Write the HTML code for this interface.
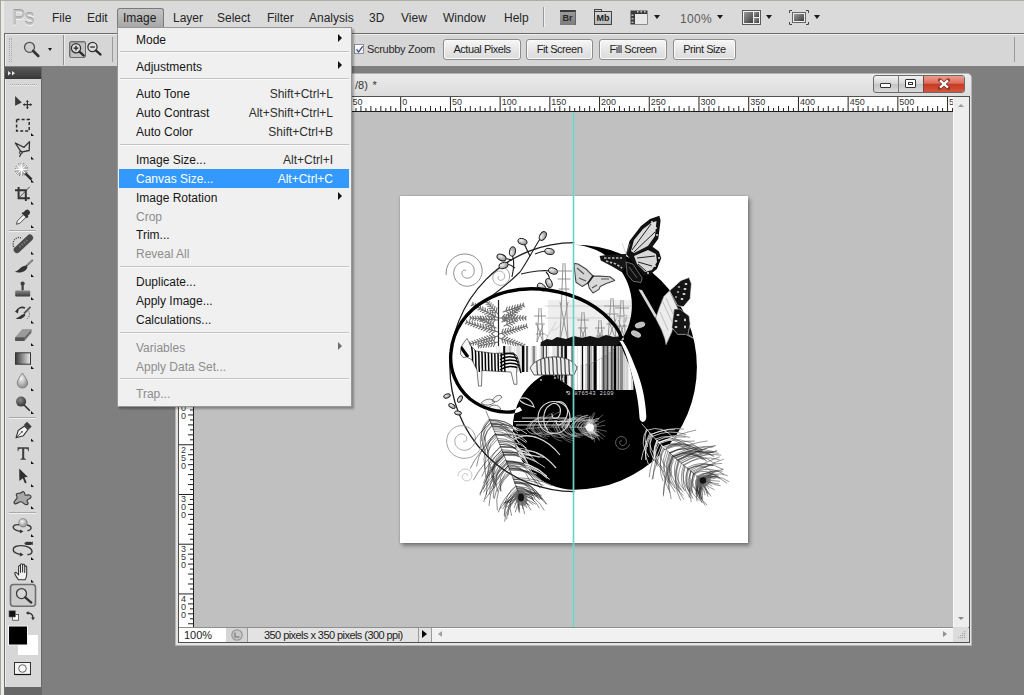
<!DOCTYPE html>
<html><head><meta charset="utf-8">
<style>
*{margin:0;padding:0;box-sizing:border-box}
html,body{width:1024px;height:695px;overflow:hidden;background:#7f7f7f;font-family:"Liberation Sans",sans-serif;position:relative}
.a{position:absolute}
svg{overflow:visible}
.mb{position:absolute;font-size:12px;color:#262626;top:11px;line-height:14px;white-space:nowrap}
.btn{position:absolute;top:39px;height:21px;border:1px solid #8c8c8c;border-radius:3px;background:linear-gradient(#f7f7f7,#e4e4e4 60%,#dcdcdc);font-size:11px;color:#1e1e1e;text-align:center;line-height:19px;white-space:nowrap;letter-spacing:-0.45px;box-shadow:inset 0 0 0 1px #fbfbfb}
.mi{position:absolute;left:136px;font-size:12px;line-height:14px;color:#161616;white-space:nowrap}
.mi.d{color:#8d8d8d}
.sc{position:absolute;font-size:12px;line-height:14px;color:#2e2e2e;white-space:nowrap}
.sep{position:absolute;left:120px;width:229px;height:1px;background:#c2c2c2;border-bottom:1px solid #fafafa;box-sizing:content-box}
.arr{position:absolute;left:338px;width:0;height:0;border-top:4px solid transparent;border-bottom:4px solid transparent;border-left:4px solid #111}
.dd{position:absolute;width:0;height:0;border-left:3.5px solid transparent;border-right:3.5px solid transparent;border-top:4.5px solid #1a1a1a}
.tri{position:absolute;width:0;height:0;border-left:3px solid transparent;border-bottom:3px solid #111}
</style></head><body>

<!-- app frame + menu bar -->
<div class="a" style="left:0;top:0;width:1024px;height:33px;background:#dadada;border-top:1px solid #a9ada3"></div>
<div class="a" style="left:0;top:0;width:1px;height:695px;background:#a3a3a3"></div>
<div class="a" style="left:1px;top:1px;width:3px;height:694px;background:#ebebe5"></div>
<div class="a" style="left:4px;top:33px;width:1px;height:662px;background:#6e6e6e"></div>
<div class="a" style="left:12px;top:6px;font-size:22px;line-height:24px;color:#c4c4c4;letter-spacing:-1px;transform:scaleX(0.92);transform-origin:0 0;text-shadow:0 -1px 0 #9c9c9c,0 1px 0 #f4f4f4">Ps</div>
<div class="mb" style="left:52px">File</div>
<div class="mb" style="left:87px">Edit</div>
<div class="a" style="left:117px;top:8px;width:47px;height:20px;border:1px solid #7a7a7a;border-bottom:none;border-radius:3px 3px 0 0;background:linear-gradient(#c4c4c4,#a6a6a6)"></div>
<div class="mb" style="left:123px;color:#1c1c1c">Image</div>
<div class="mb" style="left:173px">Layer</div>
<div class="mb" style="left:217px">Select</div>
<div class="mb" style="left:267px">Filter</div>
<div class="mb" style="left:309px">Analysis</div>
<div class="mb" style="left:369px">3D</div>
<div class="mb" style="left:401px">View</div>
<div class="mb" style="left:443px">Window</div>
<div class="mb" style="left:504px">Help</div>
<div class="a" style="left:543px;top:7px;width:1px;height:20px;background:#9a9a9a"></div>
<div class="a" style="left:544px;top:7px;width:1px;height:20px;background:#f0f0f0"></div>
<!-- Br -->
<div class="a" style="left:560px;top:10px;width:16px;height:15px;background:linear-gradient(#9a9a9a,#7c7c7c);border-top:2px solid #3a3a3a;border-right:1px solid #666;font-size:9px;font-weight:bold;color:#2a2a2a;line-height:12px;text-align:center">Br</div>
<!-- Mb -->
<div class="a" style="left:594px;top:9px;width:8px;height:3px;border:1px solid #444;border-bottom:none;background:#cfcfcf"></div>
<div class="a" style="left:594px;top:11px;width:18px;height:14px;background:linear-gradient(#d6d6d6,#b9b9b9);border:1px solid #444;font-size:9px;font-weight:bold;color:#222;line-height:12px;text-align:center">Mb</div>
<!-- film -->
<svg class="a" style="left:630px;top:10px" width="18" height="15">
<rect x="0.5" y="0.5" width="17" height="14" fill="#3c3c3c"/>
<rect x="5" y="4" width="12" height="10" fill="#e8e8e8"/>
<rect x="1.5" y="4.5" width="2" height="1.5" fill="#bbb"/><rect x="1.5" y="8" width="2" height="1.5" fill="#bbb"/><rect x="1.5" y="11.5" width="2" height="1.5" fill="#bbb"/>
<rect x="7" y="1" width="1.5" height="1.5" fill="#ccc"/><rect x="10.5" y="1" width="1.5" height="1.5" fill="#ccc"/><rect x="14" y="1" width="1.5" height="1.5" fill="#ccc"/>
</svg>
<div class="dd" style="left:654px;top:15px"></div>
<div class="mb" style="left:680px;top:12px;color:#5a5a5a;letter-spacing:0.3px">100%</div>
<div class="dd" style="left:717px;top:15px"></div>
<!-- layout icon -->
<svg class="a" style="left:742px;top:10px" width="19" height="15">
<rect x="0.5" y="0.5" width="18" height="14" fill="#f2f2f2" stroke="#5a5a5a"/>
<defs><linearGradient id="lg1" x1="0" y1="0" x2="1" y2="1"><stop offset="0" stop-color="#9a9a9a"/><stop offset="1" stop-color="#3e3e3e"/></linearGradient></defs>
<rect x="2" y="2" width="9" height="11" fill="url(#lg1)"/>
<rect x="12" y="2" width="5" height="5" fill="url(#lg1)"/>
<rect x="12" y="8" width="5" height="5" fill="url(#lg1)"/>
</svg>
<div class="dd" style="left:766px;top:15px"></div>
<!-- screen mode -->
<svg class="a" style="left:789px;top:10px" width="20" height="15">
<path d="M0.5 3V0.5H3M17 0.5H19.5V3M19.5 12V14.5H17M3 14.5H0.5V12" fill="none" stroke="#444"/>
<rect x="3.5" y="2.5" width="13" height="10" fill="#eee" stroke="#666"/>
<rect x="5" y="4" width="10" height="7" fill="url(#lg1)"/>
</svg>
<div class="dd" style="left:814px;top:15px"></div>

<!-- options bar -->
<div class="a" style="left:4px;top:33px;width:1020px;height:33px;background:#d6d6d6;border-top:1px solid #6b6b6b;border-left:1px solid #6b6b6b"></div>
<div class="a" style="left:5px;top:34px;width:1019px;height:1px;background:#eeeeee"></div>
<div class="a" style="left:5px;top:34px;width:1px;height:32px;background:#eeeeee"></div>
<div class="a" style="left:9px;top:38px;width:1px;height:24px;border-left:1px dotted #acacac"></div>
<div class="a" style="left:11px;top:38px;width:1px;height:24px;border-left:1px dotted #acacac"></div>
<svg class="a" style="left:22px;top:40px" width="20" height="20">
<circle cx="7.5" cy="7.3" r="5" fill="#cfcfcf" stroke="#505050" stroke-width="1.3"/>
<line x1="11.2" y1="11" x2="16.3" y2="16" stroke="#333" stroke-width="2.6" stroke-linecap="round"/>
</svg>
<div class="dd" style="left:48px;top:48px;border-left-width:2.5px;border-right-width:2.5px;border-top-width:3.5px"></div>
<div class="a" style="left:63px;top:35px;width:1px;height:30px;background:#8f8f8f"></div>
<div class="a" style="left:64px;top:35px;width:1px;height:30px;background:#ececec"></div>
<div class="a" style="left:69px;top:41px;width:17px;height:17px;border:1px solid #6c6c6c;border-radius:2px;background:#c3c3c3;box-shadow:inset 1px 1px 1px #9a9a9a"></div>
<svg class="a" style="left:69px;top:41px" width="20" height="20">
<circle cx="7" cy="7.2" r="4.6" fill="#ddd" stroke="#333" stroke-width="1.3"/>
<path d="M4.6 7.2H9.4M7 4.8V9.6" stroke="#222" stroke-width="1.3"/>
<line x1="10.4" y1="10.6" x2="14.8" y2="14.6" stroke="#2a2a2a" stroke-width="2.2" stroke-linecap="round"/>
</svg>
<svg class="a" style="left:86px;top:40px" width="20" height="20">
<circle cx="6.5" cy="7" r="4.6" fill="#ddd" stroke="#333" stroke-width="1.3"/>
<path d="M4.2 7H8.8" stroke="#222" stroke-width="1.3"/>
<line x1="9.8" y1="10.4" x2="14.6" y2="14.6" stroke="#2a2a2a" stroke-width="2.2" stroke-linecap="round"/>
</svg>
<div class="a" style="left:112px;top:37px;width:1px;height:25px;background:#9a9a9a"></div>
<div class="a" style="left:354px;top:44px;width:10px;height:10px;border:1px solid #8e8f9f;background:linear-gradient(#fff,#eaeaea)"></div>
<svg class="a" style="left:355px;top:45px" width="9" height="9"><path d="M1.6 4.3L3.6 7L7.6 1.3" fill="none" stroke="#36427a" stroke-width="1.2"/></svg>
<div class="a" style="left:367px;top:43px;font-size:11px;line-height:12px;color:#2a2a2a;letter-spacing:-0.3px;white-space:nowrap">Scrubby Zoom</div>
<div class="btn" style="left:443px;width:78px">Actual Pixels</div>
<div class="btn" style="left:526px;width:67px">Fit Screen</div>
<div class="btn" style="left:599px;width:68px">Fill Screen</div>
<div class="btn" style="left:673px;width:63px">Print Size</div>
<div class="a" style="left:1014px;top:37px;width:1px;height:25px;background:#9a9a9a"></div>

<!-- toolbox -->
<div class="a" style="left:5px;top:67px;width:37px;height:620px;background:#d7d7d7;border-right:1px solid #666"></div>
<div class="a" style="left:5px;top:67px;width:36px;height:12px;background:linear-gradient(#595959,#383838)"></div>
<div class="a" style="left:5px;top:687px;width:37px;height:8px;background:#676767"></div>
<div class="a" style="left:5px;top:79px;width:1px;height:608px;background:#eeeeee"></div>
<svg class="a" style="left:0;top:0" width="45" height="695">
<defs>
<linearGradient id="tg1" x1="0" y1="0" x2="0" y2="1"><stop offset="0" stop-color="#8a8a8a"/><stop offset="1" stop-color="#3a3a3a"/></linearGradient>
<linearGradient id="tg2" x1="0" y1="0" x2="1" y2="0"><stop offset="0" stop-color="#3a3a3a"/><stop offset="1" stop-color="#ececec"/></linearGradient>
<radialGradient id="tg3" cx="0.4" cy="0.35" r="0.7"><stop offset="0" stop-color="#f4f4f4"/><stop offset="1" stop-color="#8a8a8a"/></radialGradient>
<radialGradient id="tg4" cx="0.4" cy="0.35" r="0.7"><stop offset="0" stop-color="#8a8a8a"/><stop offset="1" stop-color="#2e2e2e"/></radialGradient>
</defs>
<!-- header arrows -->
<path d="M8 71L11 73.3L8 75.6Z M12 71L15 73.3L12 75.6Z" fill="#e8e8e8"/>
<!-- grip -->
<line x1="10" y1="84.5" x2="37" y2="84.5" stroke="#a8a8a8" stroke-dasharray="1 1"/>
<line x1="10" y1="85.5" x2="37" y2="85.5" stroke="#f4f4f4" stroke-dasharray="1 1"/>
<!-- move -->
<path d="M15.1 96L21.8 102.6L15.1 105.8Z" fill="#3a3a3a"/>
<path d="M27.4 100.5V108.8M23.2 104.6H31.8" stroke="#333" stroke-width="1.2"/>
<path d="M25.8 102L27.4 100.3L29 102Z M25.8 107.2L27.4 108.9L29 107.2Z M24.8 103L23.1 104.6L24.8 106.2Z M30 103L31.7 104.6L30 106.2Z" fill="#333"/>
<!-- marquee -->
<rect x="16.6" y="119.6" width="12.6" height="11.4" fill="none" stroke="#2a2a2a" stroke-width="1.5" stroke-dasharray="3 2"/>
<!-- lasso -->
<path d="M15.3 143L24 147.3L29.5 141.6L29.2 150.5L21.2 152.2Z" fill="none" stroke="#333" stroke-width="1.3" stroke-linejoin="round"/>
<circle cx="20.9" cy="152.6" r="1.5" fill="none" stroke="#333" stroke-width="1"/>
<path d="M20.6 154L19.6 157" stroke="#333" stroke-width="1.2"/>
<!-- quick select -->
<circle cx="21.5" cy="169.5" r="5.5" fill="url(#tg3)" opacity="0.9"/>
<path d="M21.5 162.5V176.5M14.5 169.5H28.5M16.5 164.5L26.5 174.5M26.5 164.5L16.5 174.5" stroke="#fff" stroke-width="1" opacity="0.9"/>
<circle cx="21.5" cy="169.5" r="6.3" fill="none" stroke="#555" stroke-width="0.9" stroke-dasharray="1 1.8"/>
<path d="M25.4 173.4L31.5 179.5" stroke="#2e2e2e" stroke-width="2.6"/>
<!-- crop -->
<path d="M18.6 187V198.3H29.8 M15 190.3H25.8V201" fill="none" stroke="#333" stroke-width="2"/>
<path d="M19.3 197.5L29.7 186.8" stroke="#444" stroke-width="0.9"/>
<!-- eyedropper -->
<path d="M16.4 224.3L17.5 220.8L24 214.2L26.5 216.7L20 223.2Z" fill="#f2f2f2" stroke="#444" stroke-width="0.9"/>
<path d="M23.3 212.5L25.8 210L27.8 209.5L29.6 211L30.2 212.5L29.2 214.5L27.8 215.6L28.4 217L26.8 218.2L21.6 213.2L23 212Z" fill="#333"/>
<!-- sep -->
<line x1="9" y1="230.5" x2="36" y2="230.5" stroke="#a9a9a9"/>
<line x1="9" y1="231.5" x2="36" y2="231.5" stroke="#f1f1f1"/>
<!-- healing -->
<path d="M14.8 248.5A6 6.5 0 0 1 21 237.8" fill="none" stroke="#333" stroke-width="1.3" stroke-dasharray="1 1.2"/>
<path d="M17 249.8L29.8 237.8" stroke="#4a4a4a" stroke-width="6.5" stroke-linecap="round"/>
<path d="M19.5 247L27.5 239.8" stroke="#7a7a7a" stroke-width="2" stroke-dasharray="1.5 1.5"/>
<!-- brush -->
<path d="M26.3 266L32.7 259.8" stroke="#555" stroke-width="1.8"/>
<path d="M27 265.2L32.2 260.3" stroke="#e8e8e8" stroke-width="0.6"/>
<path d="M15 271.5C17.5 271.5 19 268.8 21 267.5C23 266 25 265.5 26.8 265.8L27.4 267.2C26.6 269.5 24.5 271.6 21.5 272.3C19 272.8 16.5 272.4 15 271.5Z" fill="#333"/>
<!-- stamp -->
<circle cx="22.6" cy="283.6" r="2.1" fill="#3e3e3e"/>
<rect x="21.5" y="284.5" width="2.2" height="6" fill="#3e3e3e"/>
<rect x="15.2" y="290.4" width="15" height="6" rx="1" fill="url(#tg1)"/>
<!-- history brush -->
<path d="M16.5 311.5C17.5 308 21.5 306.5 25 308" fill="none" stroke="#333" stroke-width="1.6"/>
<path d="M14.8 311.5L18 313.6L18.6 309.6Z" fill="#333"/>
<path d="M24 313.5L30.5 306.8" stroke="#555" stroke-width="1.8"/>
<path d="M15.5 318.2C18 318 19.6 316.2 21.6 315C23.2 314 24.5 313.8 25 314.2L25.2 315.4C24 317.2 22 318.7 19.5 319C17.8 319.2 16.3 318.8 15.5 318.2Z" fill="#333"/>
<path d="M28.8 311.5A4 5 0 0 1 26.5 319" fill="none" stroke="#444" stroke-dasharray="1 1.2"/>
<!-- eraser -->
<path d="M15.2 337.5L22.4 329.5H31.6L31.4 332.8L24.5 340.8H15.3Z" fill="#6a6a6a"/>
<path d="M15.2 337.5L22.4 329.5H31.6L24.4 337.5Z" fill="#9a9a9a"/>
<path d="M15.2 337.5H24.4V341H15.2Z" fill="#555"/>
<!-- gradient -->
<rect x="15.5" y="352.8" width="15" height="11.4" fill="url(#tg2)" stroke="#333" stroke-width="1"/>
<!-- blur -->
<path d="M22.4 373C20 376.5 17.2 380 17.2 383C17.2 386 19.6 388 22.4 388C25.2 388 27.6 386 27.6 383C27.6 380 24.8 376.5 22.4 373Z" fill="url(#tg3)" stroke="#777" stroke-width="0.8"/>
<!-- dodge -->
<circle cx="21.1" cy="401.6" r="5" fill="url(#tg4)"/>
<path d="M24.3 405.2L29.8 410.8" stroke="#2e2e2e" stroke-width="1.6"/>
<!-- sep -->
<line x1="9" y1="417.5" x2="36" y2="417.5" stroke="#a9a9a9"/>
<line x1="9" y1="418.5" x2="36" y2="418.5" stroke="#f1f1f1"/>
<!-- pen -->
<path d="M16 437.8L18.2 430.5L24.5 426L28 429.5L23.4 435.7Z" fill="#f4f4f4" stroke="#333" stroke-width="1.1" stroke-linejoin="round"/>
<path d="M16.2 437.6L21.5 432.3" stroke="#333" stroke-width="0.9"/>
<circle cx="22" cy="431.8" r="0.9" fill="#333"/>
<path d="M24 424.8L27 421.8L31.7 426.5L28.7 429.5Z" fill="#3e3e3e"/>
<!-- type -->
<path d="M17.6 447.3H28.8V451.3H28.1C28 449.6 27.4 448.8 26.2 448.8H24.2V457.6C24.2 458.5 24.8 458.8 26 458.9V459.7H20.4V458.9C21.6 458.8 22.2 458.5 22.2 457.6V448.8H20.2C19 448.8 18.4 449.6 18.3 451.3H17.6Z" fill="#3e3e3e"/>
<!-- path select -->
<path d="M19.2 468.6L27.8 477L24.4 477.3L26.6 482.6L25 483.4L22.8 478.3L19.4 481Z" fill="#2e2e2e"/>
<!-- shape -->
<path d="M21.5 492.5C23 491 24.5 491.5 24.8 494C25.2 496.5 27 494.5 29.5 495C31.8 495.5 31.5 498.3 29 499C26.8 499.7 26.5 501 27.8 502.5C29 504 26.5 505.5 24.5 504C22.6 502.6 21.6 501 19.6 502C17.5 503 14.8 505 14.2 503C13.6 501.2 16.2 499.8 17 498C17.8 496.3 15.5 495.5 16.5 494C17.5 492.5 20 494 21.5 492.5Z" fill="#a8a8a8" stroke="#3e3e3e" stroke-width="1.2"/>
<!-- sep -->
<line x1="9" y1="512.5" x2="36" y2="512.5" stroke="#a9a9a9"/>
<line x1="9" y1="513.5" x2="36" y2="513.5" stroke="#f1f1f1"/>
<!-- 3d rotate -->
<path d="M19.5 524.8C15.5 524.2 13 525.6 13.2 527.3C13.4 529.2 17.5 531.5 22 531.5M27.5 530.8C30 530.2 31.5 529 31 527.4C30.6 526.2 29 525.3 27 525" fill="none" stroke="#3a3a3a" stroke-width="1.4"/>
<path d="M20 529.4L23.5 531.6L19.8 533.2Z" fill="#333"/>
<circle cx="23" cy="522.8" r="4.2" fill="url(#tg3)" stroke="#666" stroke-width="0.6"/>
<!-- 3d orbit -->
<rect x="25.5" y="541.8" width="5.5" height="3.2" fill="#333"/><path d="M31 542.2L32.8 541.5V545L31 544.4Z" fill="#333"/><rect x="24.5" y="542.6" width="1.2" height="1.6" fill="#333"/>
<path d="M22 554.6C17.5 554.2 13.2 552.4 13.2 549.6C13.2 546.8 17 545.5 21.5 545.6C27 545.8 32 548.2 32 551.5C32 553.3 30.2 554.6 27.5 554.8" fill="none" stroke="#3a3a3a" stroke-width="1.4"/>
<path d="M20 552.5L23.6 554.8L19.8 556.4Z" fill="#333"/>
<!-- hand -->
<path d="M18.5 579.8C17 578 15.5 575.6 14.8 573.8C14.3 572.5 15.8 571.8 16.8 573L18.6 575V566.5C18.6 565.2 20.4 565.2 20.5 566.5V572.2V564.8C20.5 563.4 22.5 563.4 22.6 564.8V572V565.2C22.6 564 24.6 564 24.7 565.2V572.4V567C24.7 565.8 26.6 565.8 26.7 567V574C26.7 576.5 26.2 578.3 25.2 579.8Z" fill="#f0f0f0" stroke="#333" stroke-width="1.05" stroke-linejoin="round"/>
<!-- zoom selected -->
<rect x="10.5" y="584.5" width="25" height="21.8" rx="3" fill="#cdcdcd" stroke="#6e6e6e" stroke-width="1.6"/>
<circle cx="21.5" cy="593.6" r="5" fill="#d6d6d6" stroke="#3a3a3a" stroke-width="1.3"/>
<path d="M25.2 597.3L31.3 602.6" stroke="#2e2e2e" stroke-width="2.2" stroke-linecap="round"/>
<!-- default colors -->
<rect x="12.6" y="614.6" width="6" height="5.6" fill="#fff" stroke="#444" stroke-width="0.8"/>
<rect x="9" y="610.8" width="6.4" height="6.2" fill="#111" stroke="#666" stroke-width="0.6"/>
<!-- swap -->
<path d="M27.2 613C30.5 612.8 33 614.5 33 618" fill="none" stroke="#333" stroke-width="1.3"/>
<path d="M26 613L28.4 611V615Z M33 620.2L31 617.6H35Z" fill="#333"/>
<!-- fg/bg -->
<rect x="18" y="635" width="20" height="20" fill="#fff"/>
<rect x="8.5" y="626" width="19" height="19" fill="#000" stroke="#f4f4f4" stroke-width="1"/>
<!-- quick mask -->
<rect x="14.5" y="662.5" width="16" height="12" fill="#f4f4f4" stroke="#333" stroke-width="1"/>
<line x1="15" y1="674.5" x2="31" y2="674.5" stroke="#111" stroke-width="1.2"/>
<circle cx="22.5" cy="668.5" r="3.8" fill="#fafafa" stroke="#555" stroke-width="0.9"/>
<!-- corner triangles -->
<g fill="#111">
<path d="M31 136V133L34 136Z"/><path d="M31 159.5V156.5L34 159.5Z"/><path d="M31 182.5V179.5L34 182.5Z"/><path d="M31 204.5V201.5L34 204.5Z"/><path d="M31 228V225L34 228Z"/>
<path d="M31 254.5V251.5L34 254.5Z"/><path d="M31 277V274L34 277Z"/><path d="M31 300V297L34 300Z"/><path d="M31 323.5V320.5L34 323.5Z"/><path d="M31 346V343L34 346Z"/><path d="M31 369V366L34 369Z"/><path d="M31 391V388L34 391Z"/><path d="M31 414V411L34 414Z"/>
<path d="M31 441.5V438.5L34 441.5Z"/><path d="M31 464V461L34 464Z"/><path d="M31 487V484L34 487Z"/><path d="M31 509V506L34 509Z"/>
<path d="M31 537V534L34 537Z"/><path d="M31 560V557L34 560Z"/><path d="M31 582.5V579.5L34 582.5Z"/>
</g>
</svg>

<!-- document window -->
<div class="a" style="left:175px;top:73px;width:797px;height:573px;background:#e4e4e4;border:1px solid #b4b4b4;border-radius:5px 5px 0 0"></div>
<div class="a" style="left:176px;top:74px;width:795px;height:22px;background:linear-gradient(#ececec,#dcdcdc);border-radius:4px 4px 0 0"></div>
<div class="a" style="left:355px;top:79px;font-size:11px;line-height:13px;color:#333;white-space:nowrap">/8)<span style="margin-left:1.5px"> *</span></div>
<!-- window buttons -->
<div class="a" style="left:873px;top:75px;width:92px;height:18px;border:1px solid #6a6a6a;border-radius:3px;overflow:hidden;background:linear-gradient(#f2f2f2,#d4d4d4 50%,#c4c4c4 51%,#dadada)"></div>
<div class="a" style="left:898px;top:76px;width:1px;height:16px;background:#7a7a7a"></div>
<div class="a" style="left:923px;top:76px;width:1px;height:16px;background:#6a4a40"></div>
<div class="a" style="left:924px;top:76px;width:40px;height:16px;border-radius:0 2px 2px 0;background:linear-gradient(#eb9c8c,#dc6e5c 45%,#c93a22 52%,#d4553e)"></div>
<div class="a" style="left:880px;top:83px;width:11px;height:5px;border:1px solid #333;border-radius:1px;background:#fff"></div>
<div class="a" style="left:905px;top:79px;width:11px;height:9px;border:1px solid #333;border-radius:1px;background:#fff"></div>
<div class="a" style="left:908px;top:82px;width:5px;height:3px;border:1px solid #333"></div>
<svg class="a" style="left:936px;top:77px" width="16" height="14"><path d="M3.8 3.2L12.2 10.8M12.2 3.2L3.8 10.8" stroke="#7a3024" stroke-width="3.6" stroke-linecap="round"/><path d="M4 3.4L12 10.6M12 3.4L4 10.6" stroke="#fff" stroke-width="2.2"/></svg>
<!-- content border -->
<div class="a" style="left:178px;top:96px;width:792px;height:547px;background:#c0c0c0;border:1px solid #505050"></div>
<div class="a" style="left:179px;top:97px;width:774px;height:15px;background:#fff;border-bottom:1px solid #1e1e1e"></div>
<div class="a" style="left:179px;top:112px;width:15px;height:515px;background:#fff;border-right:1px solid #1e1e1e"></div>
<div class="a" style="left:953px;top:97px;width:16px;height:530px;background:#ededed;border-left:1px solid #f8f8f8"></div>
<div class="a" style="left:958px;top:104px;width:0;height:0;border-left:3.5px solid transparent;border-right:3.5px solid transparent;border-bottom:3px solid #9a9a9a"></div>
<div class="a" style="left:958px;top:617px;width:0;height:0;border-left:3.5px solid transparent;border-right:3.5px solid transparent;border-top:3px solid #8a8a8a"></div>
<!-- status bar -->
<div class="a" style="left:179px;top:627px;width:790px;height:15px;background:#e3e3e3;border-top:1px solid #8e8e8e"></div>
<div class="a" style="left:179px;top:628px;width:47px;height:14px;background:#fff"></div>
<div class="a" style="left:184px;top:629px;font-size:11px;line-height:13px;color:#222">100%</div>
<div class="a" style="left:226px;top:628px;width:21px;height:14px;background:#d5d5d5"></div>
<svg class="a" style="left:229px;top:628px" width="16" height="14"><circle cx="8" cy="7" r="5.2" fill="#c9c9c9" stroke="#9a9a9a" stroke-width="1.3"/><path d="M6 4.5V9H10.5" fill="none" stroke="#8a8a8a" stroke-width="1.6"/></svg>
<div class="a" style="left:247px;top:628px;width:1px;height:14px;background:#9a9a9a"></div>
<div class="a" style="left:264px;top:629px;font-size:11px;line-height:13px;color:#222;white-space:nowrap;letter-spacing:-0.56px">350 pixels x 350 pixels (300 ppi)</div>
<div class="a" style="left:418px;top:628px;width:1px;height:14px;background:#9a9a9a"></div>
<div class="a" style="left:422px;top:630px;width:0;height:0;border-top:4.5px solid transparent;border-bottom:4.5px solid transparent;border-left:5.5px solid #000"></div>
<div class="a" style="left:431px;top:628px;width:1px;height:14px;background:#9a9a9a"></div>
<div class="a" style="left:432px;top:628px;width:521px;height:14px;background:#f1f1f1;border-top:1px solid #fafafa"></div>
<div class="a" style="left:438px;top:631px;width:0;height:0;border-top:3.5px solid transparent;border-bottom:3.5px solid transparent;border-right:4px solid #a0a0a0"></div>
<div class="a" style="left:943px;top:631px;width:0;height:0;border-top:3.5px solid transparent;border-bottom:3.5px solid transparent;border-left:4px solid #909090"></div>
<div class="a" style="left:953px;top:627px;width:15px;height:15px;background:#dcdcdc"></div>
<svg class="a" style="left:955px;top:629px" width="12" height="12" fill="#a8a8a8"><rect x="9" y="2" width="1.2" height="1.2"/><rect x="7" y="4" width="1.2" height="1.2"/><rect x="9" y="4" width="1.2" height="1.2"/><rect x="5" y="6" width="1.2" height="1.2"/><rect x="7" y="6" width="1.2" height="1.2"/><rect x="9" y="6" width="1.2" height="1.2"/><rect x="3" y="8" width="1.2" height="1.2"/><rect x="5" y="8" width="1.2" height="1.2"/><rect x="7" y="8" width="1.2" height="1.2"/><rect x="9" y="8" width="1.2" height="1.2"/></svg>
<!-- image + shadow -->
<div class="a" style="left:400px;top:196px;width:348px;height:347px;background:#fff;box-shadow:0 0 2px rgba(0,0,0,0.25),2px 3px 4px rgba(0,0,0,0.35)"></div>

<svg class="a" style="left:194px;top:97px;overflow:hidden" width="759" height="15" font-family="Liberation Sans" style="overflow:hidden"><rect x="7.34" y="0" width="1" height="15" fill="#222"/><text x="9.34" y="8" font-size="9" fill="#333">200</text><rect x="12.31" y="11" width="1" height="4" fill="#222"/><rect x="17.28" y="9" width="1" height="6" fill="#222"/><rect x="22.25" y="11" width="1" height="4" fill="#222"/><rect x="27.23" y="9" width="1" height="6" fill="#222"/><rect x="32.20" y="11" width="1" height="4" fill="#222"/><rect x="37.17" y="9" width="1" height="6" fill="#222"/><rect x="42.14" y="11" width="1" height="4" fill="#222"/><rect x="47.11" y="9" width="1" height="6" fill="#222"/><rect x="52.08" y="11" width="1" height="4" fill="#222"/><rect x="57.06" y="0" width="1" height="15" fill="#222"/><text x="59.06" y="8" font-size="9" fill="#333">150</text><rect x="62.03" y="11" width="1" height="4" fill="#222"/><rect x="67.00" y="9" width="1" height="6" fill="#222"/><rect x="71.97" y="11" width="1" height="4" fill="#222"/><rect x="76.94" y="9" width="1" height="6" fill="#222"/><rect x="81.91" y="11" width="1" height="4" fill="#222"/><rect x="86.88" y="9" width="1" height="6" fill="#222"/><rect x="91.86" y="11" width="1" height="4" fill="#222"/><rect x="96.83" y="9" width="1" height="6" fill="#222"/><rect x="101.80" y="11" width="1" height="4" fill="#222"/><rect x="106.77" y="0" width="1" height="15" fill="#222"/><text x="108.77" y="8" font-size="9" fill="#333">100</text><rect x="111.74" y="11" width="1" height="4" fill="#222"/><rect x="116.71" y="9" width="1" height="6" fill="#222"/><rect x="121.68" y="11" width="1" height="4" fill="#222"/><rect x="126.66" y="9" width="1" height="6" fill="#222"/><rect x="131.63" y="11" width="1" height="4" fill="#222"/><rect x="136.60" y="9" width="1" height="6" fill="#222"/><rect x="141.57" y="11" width="1" height="4" fill="#222"/><rect x="146.54" y="9" width="1" height="6" fill="#222"/><rect x="151.51" y="11" width="1" height="4" fill="#222"/><rect x="156.49" y="0" width="1" height="15" fill="#222"/><text x="158.49" y="8" font-size="9" fill="#333">50</text><rect x="161.46" y="11" width="1" height="4" fill="#222"/><rect x="166.43" y="9" width="1" height="6" fill="#222"/><rect x="171.40" y="11" width="1" height="4" fill="#222"/><rect x="176.37" y="9" width="1" height="6" fill="#222"/><rect x="181.34" y="11" width="1" height="4" fill="#222"/><rect x="186.31" y="9" width="1" height="6" fill="#222"/><rect x="191.29" y="11" width="1" height="4" fill="#222"/><rect x="196.26" y="9" width="1" height="6" fill="#222"/><rect x="201.23" y="11" width="1" height="4" fill="#222"/><rect x="206.20" y="0" width="1" height="15" fill="#222"/><text x="208.20" y="8" font-size="9" fill="#333">0</text><rect x="211.17" y="11" width="1" height="4" fill="#222"/><rect x="216.14" y="9" width="1" height="6" fill="#222"/><rect x="221.11" y="11" width="1" height="4" fill="#222"/><rect x="226.09" y="9" width="1" height="6" fill="#222"/><rect x="231.06" y="11" width="1" height="4" fill="#222"/><rect x="236.03" y="9" width="1" height="6" fill="#222"/><rect x="241.00" y="11" width="1" height="4" fill="#222"/><rect x="245.97" y="9" width="1" height="6" fill="#222"/><rect x="250.94" y="11" width="1" height="4" fill="#222"/><rect x="255.91" y="0" width="1" height="15" fill="#222"/><text x="257.91" y="8" font-size="9" fill="#333">50</text><rect x="260.89" y="11" width="1" height="4" fill="#222"/><rect x="265.86" y="9" width="1" height="6" fill="#222"/><rect x="270.83" y="11" width="1" height="4" fill="#222"/><rect x="275.80" y="9" width="1" height="6" fill="#222"/><rect x="280.77" y="11" width="1" height="4" fill="#222"/><rect x="285.74" y="9" width="1" height="6" fill="#222"/><rect x="290.72" y="11" width="1" height="4" fill="#222"/><rect x="295.69" y="9" width="1" height="6" fill="#222"/><rect x="300.66" y="11" width="1" height="4" fill="#222"/><rect x="305.63" y="0" width="1" height="15" fill="#222"/><text x="307.63" y="8" font-size="9" fill="#333">100</text><rect x="310.60" y="11" width="1" height="4" fill="#222"/><rect x="315.57" y="9" width="1" height="6" fill="#222"/><rect x="320.54" y="11" width="1" height="4" fill="#222"/><rect x="325.52" y="9" width="1" height="6" fill="#222"/><rect x="330.49" y="11" width="1" height="4" fill="#222"/><rect x="335.46" y="9" width="1" height="6" fill="#222"/><rect x="340.43" y="11" width="1" height="4" fill="#222"/><rect x="345.40" y="9" width="1" height="6" fill="#222"/><rect x="350.37" y="11" width="1" height="4" fill="#222"/><rect x="355.35" y="0" width="1" height="15" fill="#222"/><text x="357.35" y="8" font-size="9" fill="#333">150</text><rect x="360.32" y="11" width="1" height="4" fill="#222"/><rect x="365.29" y="9" width="1" height="6" fill="#222"/><rect x="370.26" y="11" width="1" height="4" fill="#222"/><rect x="375.23" y="9" width="1" height="6" fill="#222"/><rect x="380.20" y="11" width="1" height="4" fill="#222"/><rect x="385.17" y="9" width="1" height="6" fill="#222"/><rect x="390.15" y="11" width="1" height="4" fill="#222"/><rect x="395.12" y="9" width="1" height="6" fill="#222"/><rect x="400.09" y="11" width="1" height="4" fill="#222"/><rect x="405.06" y="0" width="1" height="15" fill="#222"/><text x="407.06" y="8" font-size="9" fill="#333">200</text><rect x="410.03" y="11" width="1" height="4" fill="#222"/><rect x="415.00" y="9" width="1" height="6" fill="#222"/><rect x="419.97" y="11" width="1" height="4" fill="#222"/><rect x="424.95" y="9" width="1" height="6" fill="#222"/><rect x="429.92" y="11" width="1" height="4" fill="#222"/><rect x="434.89" y="9" width="1" height="6" fill="#222"/><rect x="439.86" y="11" width="1" height="4" fill="#222"/><rect x="444.83" y="9" width="1" height="6" fill="#222"/><rect x="449.80" y="11" width="1" height="4" fill="#222"/><rect x="454.77" y="0" width="1" height="15" fill="#222"/><text x="456.77" y="8" font-size="9" fill="#333">250</text><rect x="459.75" y="11" width="1" height="4" fill="#222"/><rect x="464.72" y="9" width="1" height="6" fill="#222"/><rect x="469.69" y="11" width="1" height="4" fill="#222"/><rect x="474.66" y="9" width="1" height="6" fill="#222"/><rect x="479.63" y="11" width="1" height="4" fill="#222"/><rect x="484.60" y="9" width="1" height="6" fill="#222"/><rect x="489.58" y="11" width="1" height="4" fill="#222"/><rect x="494.55" y="9" width="1" height="6" fill="#222"/><rect x="499.52" y="11" width="1" height="4" fill="#222"/><rect x="504.49" y="0" width="1" height="15" fill="#222"/><text x="506.49" y="8" font-size="9" fill="#333">300</text><rect x="509.46" y="11" width="1" height="4" fill="#222"/><rect x="514.43" y="9" width="1" height="6" fill="#222"/><rect x="519.40" y="11" width="1" height="4" fill="#222"/><rect x="524.38" y="9" width="1" height="6" fill="#222"/><rect x="529.35" y="11" width="1" height="4" fill="#222"/><rect x="534.32" y="9" width="1" height="6" fill="#222"/><rect x="539.29" y="11" width="1" height="4" fill="#222"/><rect x="544.26" y="9" width="1" height="6" fill="#222"/><rect x="549.23" y="11" width="1" height="4" fill="#222"/><rect x="554.20" y="0" width="1" height="15" fill="#222"/><text x="556.20" y="8" font-size="9" fill="#333">350</text><rect x="559.18" y="11" width="1" height="4" fill="#222"/><rect x="564.15" y="9" width="1" height="6" fill="#222"/><rect x="569.12" y="11" width="1" height="4" fill="#222"/><rect x="574.09" y="9" width="1" height="6" fill="#222"/><rect x="579.06" y="11" width="1" height="4" fill="#222"/><rect x="584.03" y="9" width="1" height="6" fill="#222"/><rect x="589.01" y="11" width="1" height="4" fill="#222"/><rect x="593.98" y="9" width="1" height="6" fill="#222"/><rect x="598.95" y="11" width="1" height="4" fill="#222"/><rect x="603.92" y="0" width="1" height="15" fill="#222"/><text x="605.92" y="8" font-size="9" fill="#333">400</text><rect x="608.89" y="11" width="1" height="4" fill="#222"/><rect x="613.86" y="9" width="1" height="6" fill="#222"/><rect x="618.83" y="11" width="1" height="4" fill="#222"/><rect x="623.81" y="9" width="1" height="6" fill="#222"/><rect x="628.78" y="11" width="1" height="4" fill="#222"/><rect x="633.75" y="9" width="1" height="6" fill="#222"/><rect x="638.72" y="11" width="1" height="4" fill="#222"/><rect x="643.69" y="9" width="1" height="6" fill="#222"/><rect x="648.66" y="11" width="1" height="4" fill="#222"/><rect x="653.63" y="0" width="1" height="15" fill="#222"/><text x="655.63" y="8" font-size="9" fill="#333">450</text><rect x="658.61" y="11" width="1" height="4" fill="#222"/><rect x="663.58" y="9" width="1" height="6" fill="#222"/><rect x="668.55" y="11" width="1" height="4" fill="#222"/><rect x="673.52" y="9" width="1" height="6" fill="#222"/><rect x="678.49" y="11" width="1" height="4" fill="#222"/><rect x="683.46" y="9" width="1" height="6" fill="#222"/><rect x="688.44" y="11" width="1" height="4" fill="#222"/><rect x="693.41" y="9" width="1" height="6" fill="#222"/><rect x="698.38" y="11" width="1" height="4" fill="#222"/><rect x="703.35" y="0" width="1" height="15" fill="#222"/><text x="705.35" y="8" font-size="9" fill="#333">500</text><rect x="708.32" y="11" width="1" height="4" fill="#222"/><rect x="713.29" y="9" width="1" height="6" fill="#222"/><rect x="718.26" y="11" width="1" height="4" fill="#222"/><rect x="723.24" y="9" width="1" height="6" fill="#222"/><rect x="728.21" y="11" width="1" height="4" fill="#222"/><rect x="733.18" y="9" width="1" height="6" fill="#222"/><rect x="738.15" y="11" width="1" height="4" fill="#222"/><rect x="743.12" y="9" width="1" height="6" fill="#222"/><rect x="748.09" y="11" width="1" height="4" fill="#222"/><rect x="753.07" y="0" width="1" height="15" fill="#222"/><text x="755.07" y="8" font-size="9" fill="#333">550</text><rect x="758.04" y="11" width="1" height="4" fill="#222"/></svg>
<svg class="a" style="left:179px;top:112px;overflow:hidden" width="15" height="515" font-family="Liberation Sans"><rect x="9" y="4.16" width="6" height="1" fill="#222"/><rect x="11" y="9.13" width="4" height="1" fill="#222"/><rect x="9" y="14.10" width="6" height="1" fill="#222"/><rect x="11" y="19.07" width="4" height="1" fill="#222"/><rect x="9" y="24.04" width="6" height="1" fill="#222"/><rect x="11" y="29.01" width="4" height="1" fill="#222"/><rect x="0" y="33.98" width="15" height="1" fill="#222"/><text x="2" y="42.48" font-size="9" fill="#333">5</text><text x="2" y="50.48" font-size="9" fill="#333">0</text><rect x="11" y="38.96" width="4" height="1" fill="#222"/><rect x="9" y="43.93" width="6" height="1" fill="#222"/><rect x="11" y="48.90" width="4" height="1" fill="#222"/><rect x="9" y="53.87" width="6" height="1" fill="#222"/><rect x="11" y="58.84" width="4" height="1" fill="#222"/><rect x="9" y="63.81" width="6" height="1" fill="#222"/><rect x="11" y="68.79" width="4" height="1" fill="#222"/><rect x="9" y="73.76" width="6" height="1" fill="#222"/><rect x="11" y="78.73" width="4" height="1" fill="#222"/><rect x="0" y="83.70" width="15" height="1" fill="#222"/><text x="2" y="92.20" font-size="9" fill="#333">0</text><rect x="11" y="88.67" width="4" height="1" fill="#222"/><rect x="9" y="93.64" width="6" height="1" fill="#222"/><rect x="11" y="98.61" width="4" height="1" fill="#222"/><rect x="9" y="103.59" width="6" height="1" fill="#222"/><rect x="11" y="108.56" width="4" height="1" fill="#222"/><rect x="9" y="113.53" width="6" height="1" fill="#222"/><rect x="11" y="118.50" width="4" height="1" fill="#222"/><rect x="9" y="123.47" width="6" height="1" fill="#222"/><rect x="11" y="128.44" width="4" height="1" fill="#222"/><rect x="0" y="133.41" width="15" height="1" fill="#222"/><text x="2" y="141.91" font-size="9" fill="#333">5</text><text x="2" y="149.91" font-size="9" fill="#333">0</text><rect x="11" y="138.39" width="4" height="1" fill="#222"/><rect x="9" y="143.36" width="6" height="1" fill="#222"/><rect x="11" y="148.33" width="4" height="1" fill="#222"/><rect x="9" y="153.30" width="6" height="1" fill="#222"/><rect x="11" y="158.27" width="4" height="1" fill="#222"/><rect x="9" y="163.24" width="6" height="1" fill="#222"/><rect x="11" y="168.22" width="4" height="1" fill="#222"/><rect x="9" y="173.19" width="6" height="1" fill="#222"/><rect x="11" y="178.16" width="4" height="1" fill="#222"/><rect x="0" y="183.13" width="15" height="1" fill="#222"/><text x="2" y="191.63" font-size="9" fill="#333">1</text><text x="2" y="199.63" font-size="9" fill="#333">0</text><text x="2" y="207.63" font-size="9" fill="#333">0</text><rect x="11" y="188.10" width="4" height="1" fill="#222"/><rect x="9" y="193.07" width="6" height="1" fill="#222"/><rect x="11" y="198.04" width="4" height="1" fill="#222"/><rect x="9" y="203.02" width="6" height="1" fill="#222"/><rect x="11" y="207.99" width="4" height="1" fill="#222"/><rect x="9" y="212.96" width="6" height="1" fill="#222"/><rect x="11" y="217.93" width="4" height="1" fill="#222"/><rect x="9" y="222.90" width="6" height="1" fill="#222"/><rect x="11" y="227.87" width="4" height="1" fill="#222"/><rect x="0" y="232.84" width="15" height="1" fill="#222"/><text x="2" y="241.34" font-size="9" fill="#333">1</text><text x="2" y="249.34" font-size="9" fill="#333">5</text><text x="2" y="257.34" font-size="9" fill="#333">0</text><rect x="11" y="237.82" width="4" height="1" fill="#222"/><rect x="9" y="242.79" width="6" height="1" fill="#222"/><rect x="11" y="247.76" width="4" height="1" fill="#222"/><rect x="9" y="252.73" width="6" height="1" fill="#222"/><rect x="11" y="257.70" width="4" height="1" fill="#222"/><rect x="9" y="262.67" width="6" height="1" fill="#222"/><rect x="11" y="267.65" width="4" height="1" fill="#222"/><rect x="9" y="272.62" width="6" height="1" fill="#222"/><rect x="11" y="277.59" width="4" height="1" fill="#222"/><rect x="0" y="282.56" width="15" height="1" fill="#222"/><text x="2" y="291.06" font-size="9" fill="#333">2</text><text x="2" y="299.06" font-size="9" fill="#333">0</text><text x="2" y="307.06" font-size="9" fill="#333">0</text><rect x="11" y="287.53" width="4" height="1" fill="#222"/><rect x="9" y="292.50" width="6" height="1" fill="#222"/><rect x="11" y="297.47" width="4" height="1" fill="#222"/><rect x="9" y="302.45" width="6" height="1" fill="#222"/><rect x="11" y="307.42" width="4" height="1" fill="#222"/><rect x="9" y="312.39" width="6" height="1" fill="#222"/><rect x="11" y="317.36" width="4" height="1" fill="#222"/><rect x="9" y="322.33" width="6" height="1" fill="#222"/><rect x="11" y="327.30" width="4" height="1" fill="#222"/><rect x="0" y="332.27" width="15" height="1" fill="#222"/><text x="2" y="340.77" font-size="9" fill="#333">2</text><text x="2" y="348.77" font-size="9" fill="#333">5</text><text x="2" y="356.77" font-size="9" fill="#333">0</text><rect x="11" y="337.25" width="4" height="1" fill="#222"/><rect x="9" y="342.22" width="6" height="1" fill="#222"/><rect x="11" y="347.19" width="4" height="1" fill="#222"/><rect x="9" y="352.16" width="6" height="1" fill="#222"/><rect x="11" y="357.13" width="4" height="1" fill="#222"/><rect x="9" y="362.10" width="6" height="1" fill="#222"/><rect x="11" y="367.08" width="4" height="1" fill="#222"/><rect x="9" y="372.05" width="6" height="1" fill="#222"/><rect x="11" y="377.02" width="4" height="1" fill="#222"/><rect x="0" y="381.99" width="15" height="1" fill="#222"/><text x="2" y="390.49" font-size="9" fill="#333">3</text><text x="2" y="398.49" font-size="9" fill="#333">0</text><text x="2" y="406.49" font-size="9" fill="#333">0</text><rect x="11" y="386.96" width="4" height="1" fill="#222"/><rect x="9" y="391.93" width="6" height="1" fill="#222"/><rect x="11" y="396.90" width="4" height="1" fill="#222"/><rect x="9" y="401.88" width="6" height="1" fill="#222"/><rect x="11" y="406.85" width="4" height="1" fill="#222"/><rect x="9" y="411.82" width="6" height="1" fill="#222"/><rect x="11" y="416.79" width="4" height="1" fill="#222"/><rect x="9" y="421.76" width="6" height="1" fill="#222"/><rect x="11" y="426.73" width="4" height="1" fill="#222"/><rect x="0" y="431.70" width="15" height="1" fill="#222"/><text x="2" y="440.20" font-size="9" fill="#333">3</text><text x="2" y="448.20" font-size="9" fill="#333">5</text><text x="2" y="456.20" font-size="9" fill="#333">0</text><rect x="11" y="436.68" width="4" height="1" fill="#222"/><rect x="9" y="441.65" width="6" height="1" fill="#222"/><rect x="11" y="446.62" width="4" height="1" fill="#222"/><rect x="9" y="451.59" width="6" height="1" fill="#222"/><rect x="11" y="456.56" width="4" height="1" fill="#222"/><rect x="9" y="461.53" width="6" height="1" fill="#222"/><rect x="11" y="466.51" width="4" height="1" fill="#222"/><rect x="9" y="471.48" width="6" height="1" fill="#222"/><rect x="11" y="476.45" width="4" height="1" fill="#222"/><rect x="0" y="481.42" width="15" height="1" fill="#222"/><text x="2" y="489.92" font-size="9" fill="#333">4</text><text x="2" y="497.92" font-size="9" fill="#333">0</text><text x="2" y="505.92" font-size="9" fill="#333">0</text><rect x="11" y="486.39" width="4" height="1" fill="#222"/><rect x="9" y="491.36" width="6" height="1" fill="#222"/><rect x="11" y="496.33" width="4" height="1" fill="#222"/><rect x="9" y="501.31" width="6" height="1" fill="#222"/><rect x="11" y="506.28" width="4" height="1" fill="#222"/><rect x="9" y="511.25" width="6" height="1" fill="#222"/></svg>
<!-- artwork -->
<svg class="a" style="left:400px;top:196px;overflow:hidden" width="348" height="347" viewBox="400 196 348 347">
<defs>
<clipPath id="cpB"><path d="M574.4 244.7 A122.5 122.5 0 0 1 574.4 489.7 A61.5 61.5 0 0 1 574.4 366.5 A61 61 0 0 0 574.4 244.7 Z"/></clipPath>
<radialGradient id="lfg" cx="0.35" cy="0.35" r="0.8"><stop offset="0" stop-color="#f4f4f4"/><stop offset="1" stop-color="#7a7a7a"/></radialGradient>
<filter id="bl" x="-10%" y="-10%" width="120%" height="120%"><feGaussianBlur stdDeviation="0.5"/></filter>
</defs>
<path d="M574.4 242.7A124.5 124.5 0 0 0 574.4 491.7" fill="none" stroke="#1e1e1e" stroke-width="1.3"/>
<path d="M446.2 275.1 L446.2 273.0 L446.3 271.0 L446.6 268.9 L447.2 267.0 L447.9 265.1 L448.8 263.3 L450.0 261.6 L451.2 260.0 L452.6 258.6 L454.2 257.4 L455.8 256.4 L457.6 255.5 L459.4 254.8 L461.3 254.4 L463.2 254.1 L465.1 254.0 L466.9 254.1 L468.8 254.5 L470.6 255.0 L472.3 255.6 L473.9 256.5 L475.4 257.5 L476.8 258.7 L478.0 260.0 L479.1 261.4 L480.1 262.9 L480.8 264.4 L481.4 266.1 L481.8 267.8 L482.1 269.5 L482.1 271.2 L482.0 272.8 L481.7 274.5 L481.2 276.1 L480.6 277.6 L479.8 279.0 L478.9 280.4 L477.8 281.6 L476.7 282.7 L475.4 283.6 L474.1 284.5 L472.7 285.1 L471.2 285.6 L469.7 286.0 L468.2 286.2 L466.7 286.2 L465.3 286.1 L463.8 285.8 L462.4 285.4 L461.1 284.8 L459.8 284.1 L458.7 283.3 L457.6 282.3 L456.7 281.3 L455.9 280.2 L455.2 279.0 L454.6 277.8 L454.2 276.5 L453.9 275.2 L453.7 273.9 L453.7 272.6 L453.9 271.4 L454.1 270.1 L454.5 268.9 L455.0 267.8 L455.7 266.7 L456.4 265.7 L457.2 264.9 L458.1 264.1 L459.0 263.4 L460.0 262.8 L461.1 262.4 L462.2 262.0 L463.3 261.8 L464.4 261.7 L465.5 261.7 L466.5 261.9 L467.6 262.1 L468.6 262.5 L469.5 262.9 L470.4 263.4 L471.2 264.1 L471.9 264.7 L472.5 265.5 L473.0 266.3 L473.5 267.1 L473.8 268.0 L474.1 268.9 L474.2 269.8 L474.3 270.7 L474.2 271.6 L474.1 272.4 L473.9 273.2 L473.6 274.0 L473.2 274.8 L472.7 275.4 L472.2 276.0 L471.7 276.6 L471.0 277.0 L470.4 277.4 L469.7 277.7 L469.0 278.0 L468.4 278.1 L467.7 278.2 L467.0 278.2 L466.3 278.1 L465.7 278.0 L465.1 277.8 L464.5 277.5 L464.0 277.2 L463.5 276.8 L463.1 276.4 L462.8 276.0 L462.5 275.5 L462.3 275.0 L462.1 274.5 L462.0 274.1 L461.9 273.6 L461.9 273.1 L462.0 272.6 L462.1 272.2 L462.2 271.8 L462.4 271.4 L462.7 271.1 L462.9 270.8 L463.2 270.6 L463.5 270.4 L463.8 270.2 L464.1 270.1 L464.4 270.1 L464.7 270.1 L465.0 270.1 L465.3 270.2 L465.5 270.3 L465.7 270.4 L465.9 270.6 L466.1 270.8 L466.2 271.0" fill="none" stroke="#8a8a8a" stroke-width="1.0"/>
<path d="M503.2 267.0 L504.2 267.5 L505.2 268.0 L506.0 268.7 L506.8 269.4 L507.5 270.2 L508.1 271.1 L508.6 272.0 L509.0 273.0 L509.3 274.0 L509.5 275.0 L509.6 276.0 L509.6 277.0 L509.4 278.0 L509.2 279.0 L508.9 279.9 L508.4 280.8 L507.9 281.6 L507.3 282.3 L506.7 283.0 L506.0 283.6 L505.2 284.1 L504.4 284.6 L503.5 284.9 L502.7 285.2 L501.8 285.3 L500.9 285.4 L500.0 285.4 L499.1 285.2 L498.3 285.0 L497.5 284.7 L496.7 284.3 L496.0 283.9 L495.4 283.4 L494.8 282.8 L494.3 282.2 L493.8 281.5 L493.5 280.8 L493.2 280.0 L493.0 279.3 L492.9 278.5 L492.8 277.8 L492.9 277.0 L493.0 276.3 L493.2 275.6 L493.5 274.9 L493.8 274.2 L494.2 273.6 L494.6 273.1 L495.1 272.6 L495.7 272.2 L496.3 271.8 L496.9 271.5 L497.5 271.3 L498.1 271.2 L498.7 271.1 L499.4 271.1 L500.0 271.1 L500.6 271.2 L501.2 271.4 L501.7 271.7 L502.2 271.9 L502.7 272.3 L503.1 272.7 L503.5 273.1 L503.9 273.5 L504.1 274.0 L504.3 274.5 L504.5 275.0 L504.6 275.5 L504.6 276.0 L504.6 276.5 L504.6 277.0 L504.5 277.5 L504.3 277.9 L504.1 278.3 L503.9 278.7 L503.6 279.1 L503.3 279.4 L502.9 279.6 L502.6 279.9 L502.2 280.0 L501.8 280.2 L501.5 280.3 L501.1 280.3 L500.7 280.3 L500.3 280.3 L500.0 280.2 L499.7 280.1 L499.4 280.0 L499.1 279.8 L498.8 279.6 L498.6 279.4 L498.4 279.1 L498.3 278.9 L498.2 278.6 L498.1 278.4 L498.1 278.1 L498.0 277.9 L498.1 277.6 L498.1 277.4 L498.2 277.2 L498.3 277.0 L498.4 276.8 L498.5 276.7 L498.7 276.6 L498.8 276.5 L499.0 276.4 L499.2 276.4" fill="none" stroke="#9a9a9a" stroke-width="0.9"/>
<path d="M482.8 443.1 L482.2 445.1 L481.4 447.1 L480.5 448.9 L479.3 450.6 L478.0 452.2 L476.6 453.6 L475.0 454.8 L473.3 455.9 L471.6 456.8 L469.7 457.5 L467.8 457.9 L465.9 458.2 L464.0 458.3 L462.0 458.2 L460.2 457.8 L458.4 457.3 L456.6 456.6 L455.0 455.7 L453.5 454.7 L452.0 453.5 L450.8 452.2 L449.7 450.8 L448.7 449.3 L448.0 447.7 L447.4 446.0 L447.0 444.3 L446.7 442.6 L446.7 440.9 L446.8 439.2 L447.1 437.5 L447.6 435.9 L448.2 434.3 L449.0 432.9 L450.0 431.5 L451.0 430.3 L452.2 429.2 L453.5 428.2 L454.8 427.4 L456.2 426.7 L457.7 426.2 L459.2 425.9 L460.7 425.7 L462.2 425.7 L463.7 425.8 L465.2 426.1 L466.6 426.5 L468.0 427.1 L469.2 427.8 L470.4 428.6 L471.4 429.6 L472.4 430.6 L473.2 431.7 L473.9 432.9 L474.5 434.2 L474.9 435.4 L475.2 436.7 L475.3 438.1 L475.3 439.4 L475.2 440.6 L474.9 441.9 L474.5 443.1 L474.0 444.2 L473.4 445.3 L472.6 446.3 L471.8 447.1 L470.9 447.9 L470.0 448.6 L469.0 449.2 L467.9 449.6 L466.8 450.0 L465.7 450.2 L464.6 450.3 L463.5 450.2 L462.5 450.1 L461.4 449.8 L460.5 449.5 L459.5 449.0 L458.7 448.5 L457.9 447.9 L457.2 447.2 L456.6 446.4 L456.0 445.6 L455.6 444.8 L455.3 443.9 L455.0 443.1 L454.9 442.2 L454.8 441.3 L454.9 440.4 L455.0 439.6 L455.3 438.8 L455.6 438.0 L456.0 437.3 L456.4 436.6 L456.9 436.1 L457.5 435.5 L458.1 435.1 L458.7 434.7 L459.4 434.4 L460.1 434.2 L460.7 434.1 L461.4 434.0 L462.1 434.0 L462.7 434.1 L463.3 434.3 L463.9 434.5 L464.4 434.7 L464.9 435.1 L465.3 435.4 L465.7 435.8 L466.0 436.3 L466.3 436.7 L466.5 437.2 L466.6 437.6 L466.7 438.1 L466.8 438.6 L466.7 439.0 L466.7 439.4 L466.5 439.8 L466.4 440.2 L466.2 440.5 L465.9 440.8 L465.7 441.0 L465.4 441.2 L465.1 441.4 L464.8 441.5 L464.6 441.6 L464.3 441.6 L464.0 441.5 L463.7 441.5 L463.5 441.3 L463.3 441.2 L463.2 441.0" fill="none" stroke="#a0a0a0" stroke-width="1.0"/>
<path d="M458.0 476.0 L458.1 475.2 L458.3 474.4 L458.6 473.6 L458.9 472.9 L459.4 472.2 L459.9 471.5 L460.4 471.0 L461.0 470.5 L461.7 470.0 L462.3 469.7 L463.1 469.4 L463.8 469.2 L464.5 469.1 L465.3 469.0 L466.0 469.0 L466.7 469.2 L467.4 469.3 L468.1 469.6 L468.7 469.9 L469.3 470.3 L469.8 470.7 L470.3 471.2 L470.7 471.7 L471.1 472.3 L471.4 472.9 L471.6 473.5 L471.8 474.1 L471.9 474.7 L471.9 475.4 L471.9 476.0 L471.8 476.6 L471.6 477.2 L471.4 477.8 L471.1 478.3 L470.8 478.8 L470.4 479.2 L470.0 479.6 L469.5 479.9 L469.1 480.2 L468.6 480.5 L468.1 480.6 L467.5 480.8 L467.0 480.8 L466.5 480.8 L466.0 480.8 L465.5 480.7 L465.0 480.5 L464.6 480.3 L464.2 480.1 L463.8 479.8 L463.5 479.5 L463.1 479.2 L462.9 478.8 L462.7 478.4 L462.5 478.0 L462.4 477.6 L462.3 477.2 L462.3 476.8 L462.3 476.4 L462.4 476.0 L462.5 475.6 L462.6 475.3 L462.8 474.9 L463.0 474.6 L463.2 474.4 L463.4 474.1 L463.7 473.9 L464.0 473.8 L464.3 473.6 L464.6 473.5 L464.9 473.5 L465.2 473.5 L465.5 473.5 L465.7 473.5 L466.0 473.6 L466.2 473.7 L466.5 473.8 L466.7 473.9 L466.8 474.1 L467.0 474.3 L467.1 474.5 L467.2 474.6 L467.3 474.8 L467.3 475.0 L467.3 475.2 L467.3 475.4 L467.3 475.6 L467.2 475.7 L467.1 475.9 L467.0 476.0" fill="none" stroke="#b0b0b0" stroke-width="0.8"/>
<g fill="none" stroke="#1e1e1e" stroke-width="1.1"><path d="M489 298C497 292 510 282 520 272C527 262 533 250 540 239"/><path d="M512 277C514 268 514 260 512.5 256"/><path d="M521 274C532 271 545 270 550 271"/><path d="M515 268C511 265 508 264 506 264"/><path d="M512 260C508 259 505 258.5 504 258"/><path d="M530 256C527 250 525 246 524 243"/><path d="M535 254C540 252 544 251 546 251"/><path d="M546 272C549 275 550 278 549 281"/></g>
<ellipse cx="542.8" cy="236" rx="4.75" ry="3.0" transform="rotate(-60 542.8 236)" fill="url(#lfg)" stroke="#1e1e1e" stroke-width="0.9"/>
<ellipse cx="522.5" cy="241.6" rx="4.75" ry="3.0" transform="rotate(15 522.5 241.6)" fill="url(#lfg)" stroke="#1e1e1e" stroke-width="0.9"/>
<ellipse cx="512.5" cy="251.5" rx="4.75" ry="3.0" transform="rotate(-80 512.5 251.5)" fill="url(#lfg)" stroke="#1e1e1e" stroke-width="0.9"/>
<ellipse cx="501.5" cy="257.5" rx="4.75" ry="3.0" transform="rotate(25 501.5 257.5)" fill="url(#lfg)" stroke="#1e1e1e" stroke-width="0.9"/>
<ellipse cx="503.5" cy="265.5" rx="4.75" ry="3.0" transform="rotate(-15 503.5 265.5)" fill="url(#lfg)" stroke="#1e1e1e" stroke-width="0.9"/>
<ellipse cx="549.5" cy="251.5" rx="4.75" ry="3.0" transform="rotate(10 549.5 251.5)" fill="url(#lfg)" stroke="#1e1e1e" stroke-width="0.9"/>
<ellipse cx="553" cy="271" rx="4.75" ry="3.0" transform="rotate(15 553 271)" fill="url(#lfg)" stroke="#1e1e1e" stroke-width="0.9"/>
<ellipse cx="549" cy="283" rx="4.75" ry="3.0" transform="rotate(70 549 283)" fill="url(#lfg)" stroke="#1e1e1e" stroke-width="0.9"/>
<ellipse cx="541.5" cy="287" rx="4.75" ry="3.0" transform="rotate(35 541.5 287)" fill="url(#lfg)" stroke="#1e1e1e" stroke-width="0.9"/>
<ellipse cx="447" cy="396" rx="3.5" ry="2.0" transform="rotate(-20 447 396)" fill="url(#lfg)" stroke="#1e1e1e" stroke-width="0.9"/>
<ellipse cx="452" cy="406" rx="3.5" ry="2.0" transform="rotate(30 452 406)" fill="url(#lfg)" stroke="#1e1e1e" stroke-width="0.9"/>
<ellipse cx="460" cy="399" rx="3.5" ry="2.0" transform="rotate(-60 460 399)" fill="url(#lfg)" stroke="#1e1e1e" stroke-width="0.9"/>
<ellipse cx="458" cy="413" rx="3.5" ry="2.0" transform="rotate(10 458 413)" fill="url(#lfg)" stroke="#1e1e1e" stroke-width="0.9"/>
<path d="M481 403C486 398 492 398 495 402C490 406 485 406 481 403ZM492 401C495 395 500 394 502 397C499 401 496 403 492 401ZM488 408C492 404 498 404 501 409C496 411 491 411 488 408Z" fill="#f4f4f4" stroke="#555" stroke-width="0.8"/>
<path d="M498.0 318.0L472.0 304.0M495.5 316.7L491.5 318.5M495.5 316.7L494.9 312.3M493.0 315.3L489.3 317.1M493.0 315.3L492.4 311.2M490.6 314.0L487.0 315.7M490.6 314.0L490.0 310.1M488.1 312.7L484.7 314.2M488.1 312.7L487.5 309.0M485.6 311.3L482.4 312.8M485.6 311.3L485.1 307.9M483.1 310.0L480.2 311.4M483.1 310.0L482.7 306.8M480.7 308.7L477.9 310.0M480.7 308.7L480.2 305.6M478.2 307.3L475.6 308.5M478.2 307.3L477.8 304.5M475.7 306.0L473.3 307.1M475.7 306.0L475.3 303.4M473.2 304.7L471.1 305.7M473.2 304.7L472.9 302.3M498.0 320.0L470.0 318.0M495.3 319.8L492.5 323.1M495.3 319.8L493.0 316.1M492.7 319.6L489.9 322.8M492.7 319.6L490.4 316.1M490.0 319.4L487.4 322.4M490.0 319.4L487.9 316.1M487.3 319.2L484.9 322.1M487.3 319.2L485.3 316.1M484.7 319.0L482.4 321.7M484.7 319.0L482.8 316.1M482.0 318.9L479.8 321.3M482.0 318.9L480.2 316.1M479.3 318.7L477.3 321.0M479.3 318.7L477.7 316.1M476.7 318.5L474.8 320.6M476.7 318.5L475.1 316.1M474.0 318.3L472.3 320.3M474.0 318.3L472.6 316.1M471.3 318.1L469.8 319.9M471.3 318.1L470.0 316.1M498.0 314.0L486.0 301.0M496.2 312.0L491.9 312.4M496.2 312.0L496.9 307.8M494.3 310.0L490.4 310.4M494.3 310.0L495.0 306.2M492.5 308.0L488.9 308.4M492.5 308.0L493.1 304.5M490.6 306.0L487.4 306.3M490.6 306.0L491.2 302.9M488.8 304.0L486.0 304.3M488.8 304.0L489.3 301.2M486.9 302.0L484.5 302.3M486.9 302.0L487.4 299.6M503.0 312.0L524.0 305.0M505.8 311.1L507.2 307.0M505.8 311.1L509.3 313.5M508.6 310.1L509.9 306.4M508.6 310.1L511.9 312.4M511.4 309.2L512.6 305.7M511.4 309.2L514.4 311.3M514.2 308.3L515.3 305.1M514.2 308.3L517.0 310.2M517.0 307.3L518.0 304.4M517.0 307.3L519.5 309.1M519.8 306.4L520.7 303.8M519.8 306.4L522.1 308.0M522.6 305.5L523.4 303.1M522.6 305.5L524.6 306.9M499.0 318.0L526.0 318.0M501.8 318.0L504.5 314.5M501.8 318.0L504.5 321.5M504.7 318.0L507.2 314.7M504.7 318.0L507.2 321.3M507.5 318.0L509.9 314.9M507.5 318.0L509.9 321.1M510.4 318.0L512.5 315.1M510.4 318.0L512.5 320.9M513.2 318.0L515.2 315.3M513.2 318.0L515.2 320.7M516.1 318.0L517.9 315.5M516.1 318.0L517.9 320.5M518.9 318.0L520.6 315.7M518.9 318.0L520.6 320.3M521.7 318.0L523.3 315.9M521.7 318.0L523.3 320.1M524.6 318.0L526.0 316.1M524.6 318.0L526.0 319.9M502.0 322.0L520.0 308.0M504.1 320.4L504.0 316.0M504.1 320.4L508.3 321.5M506.2 318.7L506.2 314.6M506.2 318.7L510.2 319.8M508.4 317.1L508.3 313.3M508.4 317.1L512.0 318.1M510.5 315.4L510.4 311.9M510.5 315.4L513.9 316.3M512.6 313.8L512.5 310.5M512.6 313.8L515.7 314.6M514.7 312.1L514.7 309.1M514.7 312.1L517.6 312.9M516.8 310.5L516.8 307.8M516.8 310.5L519.4 311.2M518.9 308.8L518.9 306.4M518.9 308.8L521.3 309.5M498.0 332.0L466.0 322.0M495.2 331.1L491.6 333.7M495.2 331.1L493.7 327.0M492.4 330.3L489.0 332.7M492.4 330.3L491.0 326.3M489.7 329.4L486.4 331.7M489.7 329.4L488.3 325.6M486.9 328.5L483.8 330.7M486.9 328.5L485.6 324.9M484.1 327.7L481.2 329.8M484.1 327.7L482.9 324.3M481.3 326.8L478.5 328.8M481.3 326.8L480.2 323.6M478.5 325.9L475.9 327.8M478.5 325.9L477.5 322.9M475.7 325.0L473.3 326.8M475.7 325.0L474.7 322.2M473.0 324.2L470.7 325.8M473.0 324.2L472.0 321.5M470.2 323.3L468.1 324.8M470.2 323.3L469.3 320.9M467.4 322.4L465.4 323.8M467.4 322.4L466.6 320.2M498.0 336.0L470.0 344.0M495.3 336.8L493.8 340.9M495.3 336.8L491.8 334.1M492.7 337.5L491.2 341.4M492.7 337.5L489.4 335.0M490.0 338.3L488.6 342.0M490.0 338.3L486.9 335.9M487.3 339.0L486.0 342.5M487.3 339.0L484.4 336.8M484.7 339.8L483.4 343.1M484.7 339.8L481.9 337.7M482.0 340.6L480.8 343.6M482.0 340.6L479.4 338.6M479.3 341.3L478.2 344.2M479.3 341.3L476.9 339.5M476.7 342.1L475.6 344.8M476.7 342.1L474.4 340.4M474.0 342.9L473.1 345.3M474.0 342.9L471.9 341.3M471.3 343.6L470.5 345.9M471.3 343.6L469.4 342.2M496.0 328.0L480.0 318.0M493.5 326.5L489.6 328.0M493.5 326.5L493.2 322.2M491.1 324.9L487.4 326.3M491.1 324.9L490.7 321.0M488.6 323.4L485.3 324.7M488.6 323.4L488.3 319.9M486.2 321.8L483.2 323.0M486.2 321.8L485.9 318.7M483.7 320.3L481.1 321.3M483.7 320.3L483.5 317.5M481.2 318.8L478.9 319.7M481.2 318.8L481.0 316.3M499.0 334.0L527.0 326.0M501.7 333.2L503.2 329.1M501.7 333.2L505.2 335.9M504.3 332.5L505.8 328.6M504.3 332.5L507.6 335.0M507.0 331.7L508.4 328.0M507.0 331.7L510.1 334.1M509.7 331.0L511.0 327.5M509.7 331.0L512.6 333.2M512.3 330.2L513.6 326.9M512.3 330.2L515.1 332.3M515.0 329.4L516.2 326.4M515.0 329.4L517.6 331.4M517.7 328.7L518.8 325.8M517.7 328.7L520.1 330.5M520.3 327.9L521.4 325.2M520.3 327.9L522.6 329.6M523.0 327.1L523.9 324.7M523.0 327.1L525.1 328.7M525.7 326.4L526.5 324.1M525.7 326.4L527.6 327.8M499.0 338.0L524.0 346.0M501.6 338.8L505.2 336.3M501.6 338.8L503.1 343.0M504.3 339.7L507.6 337.3M504.3 339.7L505.6 343.6M506.9 340.5L510.1 338.3M506.9 340.5L508.2 344.2M509.5 341.4L512.5 339.3M509.5 341.4L510.7 344.8M512.2 342.2L514.9 340.2M512.2 342.2L513.3 345.4M514.8 343.1L517.4 341.2M514.8 343.1L515.8 346.0M517.4 343.9L519.8 342.2M517.4 343.9L518.4 346.6M520.1 344.7L522.2 343.2M520.1 344.7L520.9 347.3M522.7 345.6L524.7 344.2M522.7 345.6L523.5 347.9M504.0 326.0L516.0 320.0M506.7 324.7L507.4 320.6M506.7 324.7L510.3 326.5M509.3 323.3L510.0 319.8M509.3 323.3L512.5 324.9M512.0 322.0L512.5 319.0M512.0 322.0L514.7 323.4M514.7 320.7L515.1 318.2M514.7 320.7L517.0 321.8M498.0 342.0L478.0 346.0M495.3 342.5L493.5 346.4M495.3 342.5L492.1 339.7M492.7 343.1L490.9 346.7M492.7 343.1L489.7 340.4M490.0 343.6L488.4 346.9M490.0 343.6L487.3 341.1M487.3 344.1L485.9 347.2M487.3 344.1L484.8 341.9M484.7 344.7L483.3 347.4M484.7 344.7L482.4 342.6M482.0 345.2L480.8 347.7M482.0 345.2L479.9 343.4M479.3 345.7L478.3 347.9M479.3 345.7L477.5 344.1" fill="none" stroke="#5e5e5e" stroke-width="1.1" opacity="0.9" stroke-linecap="round"/>
<path d="M498.5 300V350" stroke="#222" stroke-width="1.2"/>
<path d="M545 345C546 335 552 330 556 322M548 336C540 332 537 327 536 322M552 330C557 330 560 326 562 322" fill="none" stroke="#aaa" stroke-width="0.8"/>
<g filter="url(#bl)"><rect x="548" y="300" width="84" height="42" fill="#e0e0e0" opacity="0.55"/><path d="M560.0 341L563 263M568.0 341L565 263M556 271H572M557.6 279H570.4M558.4 289H569.6M560.0 341L568.0 302.0M568.0 341L560.0 302.0M608.0 340L611 298M616.0 340L613 298M604 306H620M605.6 314H618.4M606.4 324H617.6M608.0 340L616.0 319.0M616.0 340L608.0 319.0M618.5 340L621 300M625.5 340L623 300M615 308H629M616.4 316H627.6M617.1 326H626.9M618.5 340L625.5 320.0M625.5 340L618.5 320.0M580.0 342L582 312M586.0 342L584 312M577 320H589M578.2 328H587.8M578.8 338H587.2M580.0 342L586.0 327.0M586.0 342L580.0 327.0M537.0 342L539 308M543.0 342L541 308M534 316H546M535.2 324H544.8M535.8 334H544.2M537.0 342L543.0 325.0M543.0 342L537.0 325.0M597.5 340L599 320M602.5 340L601 320M595 328H605M596.0 336H604.0M596.5 346H603.5M597.5 340L602.5 330.0M602.5 340L597.5 330.0" fill="none" stroke="#8a8a8a" stroke-width="0.9"/><path d="M545 306H632M545 318H632" stroke="#aaa" stroke-width="0.5"/></g>
<path d="M540 348L541 342L547 339L552 340L557 337L566 339L574 336L582 338L590 336L598 338L606 335L614 337L622 336L630 339L632 348Z" fill="#141414"/>
<clipPath id="cpBar"><path d="M495 346H621L629 364.5L633 380L634.5 390H575L548 372L530 372H495Z"/></clipPath>
<g clip-path="url(#cpBar)"><rect x="495" y="346" width="137" height="45" fill="#e8e8e8"/><rect x="495.0" y="346" width="1" height="45" fill="#fff"/><rect x="497.0" y="346" width="1.2" height="45" fill="#fff"/><rect x="500.2" y="346" width="2.5" height="45" fill="#fff"/><rect x="503.2" y="346" width="2" height="45" fill="#000"/><rect x="507.2" y="346" width="1.2" height="45" fill="#ddd"/><rect x="509.4" y="346" width="1" height="45" fill="#aaa"/><rect x="512.4" y="346" width="1.5" height="45" fill="#fff"/><rect x="514.9" y="346" width="1" height="45" fill="#fff"/><rect x="516.9" y="346" width="3" height="45" fill="#ddd"/><rect x="521.9" y="346" width="2.5" height="45" fill="#000"/><rect x="524.9" y="346" width="1" height="45" fill="#fff"/><rect x="526.4" y="346" width="1.2" height="45" fill="#000"/><rect x="529.1" y="346" width="1.5" height="45" fill="#fff"/><rect x="532.6" y="346" width="2.5" height="45" fill="#888"/><rect x="537.1" y="346" width="2.5" height="45" fill="#fff"/><rect x="541.6" y="346" width="1" height="45" fill="#666"/><rect x="543.1" y="346" width="0.8" height="45" fill="#111"/><rect x="545.9" y="346" width="1" height="45" fill="#444"/><rect x="548.9" y="346" width="3" height="45" fill="#fff"/><rect x="553.4" y="346" width="1.5" height="45" fill="#ddd"/><rect x="556.9" y="346" width="2" height="45" fill="#666"/><rect x="560.9" y="346" width="2" height="45" fill="#333"/><rect x="564.4" y="346" width="2.5" height="45" fill="#000"/><rect x="568.4" y="346" width="2" height="45" fill="#fff"/><rect x="571.4" y="346" width="2.5" height="45" fill="#666"/><rect x="574.4" y="346" width="2.5" height="45" fill="#fff"/><rect x="577.9" y="346" width="2.5" height="45" fill="#fff"/><rect x="581.9" y="346" width="1.2" height="45" fill="#000"/><rect x="583.6" y="346" width="1.5" height="45" fill="#fff"/><rect x="587.1" y="346" width="0.8" height="45" fill="#666"/><rect x="588.4" y="346" width="1.5" height="45" fill="#111"/><rect x="590.4" y="346" width="1.2" height="45" fill="#888"/><rect x="593.6" y="346" width="3" height="45" fill="#000"/><rect x="597.1" y="346" width="2" height="45" fill="#fff"/><rect x="599.6" y="346" width="1.5" height="45" fill="#fff"/><rect x="602.6" y="346" width="2" height="45" fill="#444"/><rect x="605.6" y="346" width="0.8" height="45" fill="#444"/><rect x="606.9" y="346" width="0.8" height="45" fill="#000"/><rect x="608.2" y="346" width="1" height="45" fill="#888"/><rect x="610.7" y="346" width="2" height="45" fill="#444"/><rect x="613.7" y="346" width="2.5" height="45" fill="#000"/><rect x="617.7" y="346" width="1.2" height="45" fill="#666"/><rect x="619.9" y="346" width="3" height="45" fill="#888"/><rect x="624.9" y="346" width="1.5" height="45" fill="#ddd"/><rect x="628.4" y="346" width="2.5" height="45" fill="#fff"/><rect x="631.4" y="346" width="2" height="45" fill="#ddd"/></g>
<path d="M486 411C498 440 511 472 520 497M504.0 455.2Q485.2 471.9 486.4 494.4M495.3 433.6Q479.0 448.3 476.6 466.0M492.1 425.7Q479.3 437.3 485.6 454.5M517.2 489.2Q531.5 489.1 540.4 497.1M504.0 455.2Q528.9 454.5 544.8 467.3M491.0 423.2Q504.6 422.6 511.0 435.1M489.9 420.5Q477.8 431.5 480.8 447.0M495.5 434.0Q514.0 433.3 526.1 442.5M510.6 472.0Q496.9 484.0 494.2 498.5M507.2 463.2Q525.1 462.7 537.0 470.5M496.6 436.9Q481.9 450.2 491.4 470.3M492.5 426.8Q508.4 426.2 519.4 430.6M518.9 494.1Q536.4 494.1 544.1 510.1M490.7 422.3Q479.6 432.4 473.5 441.3M491.3 424.0Q505.4 423.4 515.0 428.3M491.8 425.1Q480.2 435.7 488.0 451.8M518.0 491.6Q529.0 491.5 534.1 501.3M490.9 422.9Q478.5 434.2 484.0 450.7M503.8 454.8Q527.9 454.0 544.9 457.5M502.9 452.5Q488.3 465.5 495.8 485.1M496.1 435.5Q477.9 451.9 470.3 468.3M508.5 466.5Q527.2 466.0 535.8 483.1M516.2 486.6Q528.7 486.5 533.1 499.8M503.6 454.3Q522.0 453.7 534.5 460.4M498.8 442.4Q515.1 441.8 521.4 458.4M509.8 470.0Q527.9 469.5 539.2 479.3M504.0 455.2Q492.1 465.8 487.5 476.8M501.8 449.7Q518.8 449.2 527.6 463.0M509.0 467.9Q530.5 467.4 539.8 487.9M507.2 463.4Q491.0 477.7 483.8 491.9M503.0 452.6Q523.7 452.0 532.2 472.6M497.5 439.0Q480.2 454.6 485.9 477.1M508.6 466.8Q489.5 483.5 489.0 505.5M519.4 495.4Q533.3 495.4 539.4 508.0M516.1 486.5Q536.5 486.3 546.4 503.7M495.8 434.7Q513.4 434.1 520.4 452.3M497.3 438.5Q515.0 437.8 523.0 454.4M507.8 464.8Q523.4 464.4 529.6 480.3M503.9 455.0Q486.7 470.3 483.5 488.7M508.2 465.8Q533.6 465.2 549.5 479.2M504.7 457.0Q484.9 474.6 480.1 495.1M489.6 419.7Q507.1 419.0 517.6 430.4M499.6 444.2Q520.2 443.5 528.3 464.6M512.8 477.8Q535.9 477.4 551.5 485.5M500.7 446.9Q482.1 463.6 473.5 479.8M502.8 452.3Q524.3 451.6 539.2 457.4M509.5 469.0Q499.1 478.1 500.7 490.8M491.3 423.9Q512.8 423.0 526.7 433.6M516.9 488.5Q503.2 500.0 504.8 516.5M508.1 465.5Q492.6 479.2 493.3 497.6M506.1 460.5Q521.3 460.1 529.2 472.6M489.6 419.8Q506.1 419.1 516.0 429.5M518.0 491.4Q507.7 500.1 502.8 508.7M493.7 429.7Q514.3 428.9 526.8 441.5M500.4 446.2Q487.8 457.5 487.9 472.3M502.4 451.3Q487.8 464.4 493.7 483.7M514.8 483.0Q530.7 482.8 541.6 487.0M508.2 465.7Q496.5 476.0 500.9 491.2M500.7 446.8Q526.6 446.0 543.9 457.0M498.2 440.7Q517.5 440.1 525.5 459.2M518.1 491.8Q506.8 501.3 508.2 514.9M510.9 472.7Q493.5 488.0 497.3 509.9M498.2 440.9Q515.2 440.2 526.3 448.0M500.8 447.1Q519.8 446.5 532.2 455.9M495.3 433.6Q484.6 443.2 488.5 457.2M490.5 421.8Q507.6 421.1 517.7 432.8M510.4 471.4Q494.1 485.7 485.4 498.8M495.6 434.4Q479.9 448.6 485.2 469.0M513.4 479.1Q528.8 478.9 535.5 493.5M500.5 446.4Q524.4 445.6 537.7 463.2M517.6 490.4Q536.3 490.3 546.4 504.1M501.9 449.9Q485.4 464.6 486.5 484.3M517.7 490.6Q505.2 501.2 504.1 515.1M505.6 459.2Q488.8 474.2 489.6 494.2M495.8 434.8Q519.2 433.9 530.3 455.0M519.5 495.6Q507.5 505.7 506.6 519.1M499.6 444.3Q514.5 443.8 522.4 455.4M503.6 454.2Q488.4 467.8 483.5 482.8M489.8 420.3Q500.8 419.9 507.2 427.5M506.6 461.7Q533.4 461.0 549.1 478.9M517.4 490.0Q505.9 499.7 499.9 508.9M518.7 493.4Q532.2 493.4 541.1 498.8M507.4 463.8Q532.0 463.1 546.9 478.3M507.4 463.9Q487.9 481.1 483.8 501.6M516.6 487.8Q528.9 487.7 534.9 497.9M507.0 462.6Q494.5 473.6 493.4 487.5M506.7 461.9Q521.1 461.5 530.1 469.2M519.2 494.9Q505.7 506.2 504.6 521.2M493.0 428.0Q505.6 427.5 514.0 433.0M506.8 462.2Q488.6 478.2 479.8 493.5M502.4 451.2Q518.1 450.7 527.4 461.1M503.4 453.6Q491.8 464.0 491.5 477.4M502.9 452.5Q518.7 452.0 529.8 455.2M514.1 481.0Q527.9 480.8 532.7 495.5M489.3 419.0Q479.1 428.2 481.7 441.2M509.3 468.6Q530.1 468.1 542.5 481.5M516.1 486.4Q502.3 498.3 498.4 512.0M516.8 488.4Q531.6 488.3 539.4 499.6M506.5 461.4Q531.5 460.7 546.8 475.8M506.6 461.8Q531.5 461.1 546.6 476.3M509.1 468.0Q531.9 467.4 542.7 487.8M515.0 483.3Q530.0 483.2 537.6 495.5M518.0 491.6Q529.9 491.5 537.8 496.0M492.1 425.9Q504.7 425.4 510.1 437.6M501.9 449.9Q487.4 462.9 481.8 476.3M514.4 481.8Q533.2 481.5 541.5 498.9M514.6 482.5Q533.8 482.2 542.4 500.0M517.7 490.8Q506.3 500.4 511.6 515.5M513.5 479.4Q531.2 479.1 543.2 485.2M489.7 420.0Q480.6 428.3 485.1 440.6M495.8 434.7Q519.5 433.8 536.2 437.0M492.1 425.8Q510.9 425.0 519.0 443.3M491.5 424.3Q507.7 423.7 516.3 436.6M506.0 460.3Q491.9 472.8 497.3 491.3M509.7 469.7Q525.5 469.4 536.3 474.0M504.0 455.3Q491.6 466.4 493.2 481.6M494.4 431.5Q507.9 431.0 515.0 441.7M515.8 485.7Q505.8 494.3 504.7 505.4M508.2 465.8Q495.4 477.1 490.8 489.2M517.7 490.7Q531.7 490.7 541.2 495.4M518.6 493.2Q514.1 503.1 506.6 507.1M518.6 493.2Q518.0 500.6 514.2 507.6M518.6 493.2Q522.8 500.6 529.5 505.4M518.6 493.2Q518.2 505.9 518.6 511.2M518.6 493.2Q519.6 502.9 517.9 508.2M518.6 493.2Q523.4 503.3 522.8 508.6M518.6 493.2Q519.6 502.6 515.4 511.9M518.6 493.2Q518.8 504.3 519.6 512.4M518.6 493.2Q524.4 494.3 529.7 494.9M518.6 493.2Q528.0 500.6 535.5 504.1M518.6 493.2Q515.7 500.4 507.5 502.6M518.6 493.2Q517.8 501.5 514.7 504.0M518.6 493.2Q527.1 494.9 536.8 493.0M518.6 493.2Q526.8 496.3 532.8 499.1M518.6 493.2Q514.7 500.3 509.2 502.8M518.6 493.2Q524.4 501.1 527.6 504.8M518.6 493.2Q525.7 498.9 533.1 504.7M518.6 493.2Q522.5 499.7 527.7 500.4M518.6 493.2Q526.4 501.7 530.9 510.0M518.6 493.2Q510.1 501.6 503.6 503.0M518.6 493.2Q525.3 501.3 526.9 507.7M518.6 493.2Q523.2 505.2 524.6 513.7M518.6 493.2Q512.9 498.5 505.0 503.1M518.6 493.2Q518.5 501.5 519.3 509.5M518.6 493.2Q520.9 502.1 522.3 505.9M518.6 493.2Q522.8 501.4 525.0 506.4" fill="none" stroke="#1e1e1e" stroke-width="0.6" opacity="0.85" stroke-linecap="round"/>
<path d="M642 424C660 446 684 466 703 481M659.8 443.4Q680.5 433.7 698.7 447.7M693.9 473.7Q689.3 487.1 689.1 497.3M701.3 479.7Q697.7 490.3 701.7 498.9M702.8 480.9Q700.3 488.5 702.2 494.7M652.5 436.0Q644.7 451.5 658.7 465.0M700.0 478.6Q696.2 489.8 700.0 498.8M691.3 471.6Q700.9 465.9 709.5 465.8M700.7 479.2Q714.1 470.9 727.4 475.4M702.3 480.4Q715.5 472.3 728.8 481.5M672.6 455.5Q693.6 444.4 712.4 447.2M698.3 477.2Q692.8 493.3 706.9 504.9M677.6 460.0Q698.8 448.4 718.3 453.3M674.4 457.2Q665.4 479.8 671.1 498.6M693.8 473.6Q710.2 463.7 723.3 459.3M683.1 464.8Q701.6 454.2 719.1 459.7M699.0 477.8Q696.0 486.7 696.8 493.6M670.0 453.2Q690.4 442.6 707.2 441.0M669.3 452.6Q661.1 472.2 675.3 488.5M679.7 461.9Q696.1 452.8 710.3 452.3M664.3 447.9Q656.5 465.5 662.9 480.9M702.1 480.3Q698.8 490.2 699.1 497.9M673.6 456.4Q694.1 445.5 712.9 451.4M696.8 476.1Q708.6 468.9 720.2 478.1M700.8 479.3Q709.2 474.1 717.1 474.9M670.1 453.2Q686.7 444.6 701.8 449.4M700.9 479.3Q696.7 491.9 701.4 501.9M671.0 454.1Q666.0 466.2 671.4 476.4M690.7 471.1Q684.7 488.0 699.0 500.6M701.6 479.9Q696.9 494.1 705.0 505.2M668.0 451.3Q658.5 473.6 670.1 492.7M701.6 479.9Q698.0 490.8 702.4 499.5M688.8 469.5Q684.5 481.5 690.2 491.2M699.9 478.5Q696.5 488.6 697.0 496.4M669.6 452.8Q686.8 443.9 702.7 452.2M693.4 473.3Q689.0 486.1 701.2 495.1M699.1 477.9Q696.0 487.1 695.7 494.1M673.7 456.6Q694.5 445.5 713.9 456.4M650.7 434.0Q643.3 448.1 641.4 459.5M646.5 429.4Q638.7 443.5 648.7 456.8M697.7 476.8Q710.3 469.2 722.3 471.2M690.3 470.8Q706.6 461.2 719.5 457.0M673.4 456.2Q690.1 447.3 705.6 459.9M669.4 452.6Q681.3 446.4 692.3 450.8M672.2 455.2Q663.0 477.8 683.2 495.4M652.7 436.2Q670.4 428.6 685.5 434.5M683.8 465.4Q702.2 454.9 716.9 450.7M666.3 449.7Q658.2 468.5 671.5 484.2M673.6 456.5Q688.9 448.3 703.1 459.6M677.7 460.1Q697.0 449.4 715.3 463.7M651.3 434.7Q644.4 448.0 645.6 459.6M647.3 430.2Q662.8 424.1 674.4 439.0M663.0 446.6Q683.0 436.9 700.6 452.2M688.0 468.9Q699.6 462.1 710.9 470.9M673.2 456.1Q665.0 476.3 682.9 492.0M685.3 466.6Q678.8 484.3 690.8 498.3M693.6 473.5Q690.0 483.9 692.7 492.3M655.4 439.0Q668.8 433.0 680.4 441.3M686.8 467.9Q700.0 460.3 712.7 465.5M656.8 440.4Q651.3 451.8 655.8 462.0M679.2 461.4Q671.1 482.7 680.6 500.4M694.2 474.0Q706.3 466.8 718.0 477.4M675.3 458.0Q691.5 449.2 706.7 461.0M692.5 472.6Q707.9 463.4 721.7 463.4M663.0 446.6Q678.2 439.2 691.2 453.2M663.4 447.0Q654.8 466.3 668.5 482.8M690.7 471.1Q686.9 482.1 690.0 491.0M651.8 435.2Q646.8 444.9 654.1 453.7M665.9 449.3Q684.3 440.1 700.8 454.0M663.2 446.8Q655.0 465.1 652.2 479.3M657.2 440.8Q649.3 457.3 663.3 471.5M691.0 471.4Q686.6 483.8 698.5 492.6M658.6 442.2Q670.3 436.7 680.7 443.6M676.6 459.1Q670.0 476.0 681.2 489.7M681.1 463.0Q700.2 452.3 716.7 451.1M661.6 445.2Q653.2 463.6 653.0 478.6M664.5 448.0Q680.6 440.1 694.3 441.1M677.6 460.0Q691.5 452.4 702.8 450.3M687.9 468.8Q682.0 485.1 692.9 498.0M697.0 476.2Q691.9 491.3 702.4 502.9M694.9 474.5Q689.6 489.8 691.0 501.8M683.7 465.3Q678.8 478.4 683.8 489.3M657.9 441.5Q651.1 455.7 662.5 468.0M689.0 469.7Q701.3 462.6 712.8 465.4M678.2 460.6Q669.9 482.0 683.8 499.5M701.3 479.6Q714.2 471.7 726.9 483.2M681.4 463.3Q675.6 478.7 679.3 491.3M662.5 446.1Q657.1 458.2 666.9 468.3M670.1 453.3Q661.3 474.3 674.8 491.9M665.3 448.8Q682.2 440.4 697.5 449.1M678.6 460.9Q699.1 449.6 715.5 445.6M698.2 477.2Q708.6 470.9 717.9 470.8M665.0 448.5Q683.9 439.1 701.1 448.9M675.8 458.4Q695.2 447.9 713.1 452.6M673.2 456.1Q664.5 477.5 663.5 494.4M657.1 440.8Q650.7 454.3 657.3 466.4M664.1 447.6Q678.1 440.7 690.7 446.8M651.1 434.4Q668.9 426.9 683.6 429.1M677.5 459.9Q693.7 451.0 706.9 448.2M699.4 478.1Q695.1 490.8 696.9 500.9M678.6 460.9Q672.1 477.7 685.0 491.0M701.3 479.7Q708.6 475.2 715.7 477.2M672.4 455.4Q663.2 477.9 663.3 496.0M647.1 430.0Q642.4 438.6 647.6 446.7M675.0 457.7Q696.1 446.3 714.2 446.0M656.8 440.5Q674.5 432.5 689.8 437.4M658.9 442.5Q673.2 435.9 685.2 437.0M659.3 442.9Q679.8 433.3 695.8 430.1M673.0 455.9Q665.6 474.2 668.9 489.4M658.7 442.4Q675.1 434.7 689.3 446.3M673.9 456.7Q694.2 445.8 713.3 455.5M693.5 473.4Q708.7 464.3 723.7 474.0M659.4 443.1Q650.7 461.8 649.2 476.8M684.6 466.0Q679.3 480.3 689.6 491.6M698.2 477.2Q695.2 486.2 698.7 493.5M700.9 479.4Q713.2 471.8 723.3 469.2M688.2 469.0Q705.6 458.9 722.7 469.2M681.3 463.2Q701.9 451.6 720.9 455.1M649.8 433.0Q641.4 448.9 648.2 463.7M687.7 468.6Q682.8 482.3 690.4 493.4M651.1 434.4Q663.9 429.0 674.4 429.7M699.9 478.5Q713.0 484.9 720.3 485.8M699.9 478.5Q704.6 483.8 709.1 489.0M699.9 478.5Q709.3 476.3 713.1 473.0M699.9 478.5Q700.8 488.7 700.7 492.6M699.9 478.5Q705.1 489.1 708.6 494.2M699.9 478.5Q709.3 480.7 719.5 481.3M699.9 478.5Q707.8 487.2 714.1 489.5M699.9 478.5Q707.4 474.9 715.2 471.2M699.9 478.5Q700.8 488.3 697.4 496.4M699.9 478.5Q711.6 477.6 718.5 475.9M699.9 478.5Q705.9 489.7 710.9 496.2M699.9 478.5Q708.7 478.3 713.2 476.4M699.9 478.5Q707.0 479.4 711.5 474.7M699.9 478.5Q708.5 479.8 715.1 478.5M699.9 478.5Q704.5 486.0 705.0 494.9M699.9 478.5Q712.6 483.5 718.7 484.0M699.9 478.5Q701.8 487.8 703.1 491.4M699.9 478.5Q701.7 488.4 702.7 498.4M699.9 478.5Q702.9 487.0 699.9 491.3M699.9 478.5Q708.0 483.8 711.9 486.0M699.9 478.5Q707.6 483.4 711.8 482.6M699.9 478.5Q706.9 487.3 707.4 493.3M699.9 478.5Q701.0 485.8 702.9 489.5M699.9 478.5Q705.5 487.5 708.0 496.4M699.9 478.5Q708.0 474.1 712.3 470.7M699.9 478.5Q698.8 487.4 696.7 490.5" fill="none" stroke="#262626" stroke-width="0.6" opacity="0.8" stroke-linecap="round"/>
<path d="M574.4 244.7 A122.5 122.5 0 0 1 574.4 489.7 A61.5 61.5 0 0 1 574.4 366.5 A61 61 0 0 0 574.4 244.7 Z" fill="#000"/>
<ellipse cx="521" cy="498" rx="6" ry="8" transform="rotate(-25 521 498)" fill="#666" opacity="0.8"/><ellipse cx="521" cy="497.5" rx="3" ry="4" fill="#111"/>
<ellipse cx="703" cy="481" rx="8" ry="6" transform="rotate(-20 703 481)" fill="#666" opacity="0.75"/><circle cx="703" cy="480.5" r="3.2" fill="#111"/>
<g clip-path="url(#cpBar)"><g clip-path="url(#cpB)"><rect x="560" y="346" width="72" height="44" fill="#cfcfcf"/><rect x="495.0" y="346" width="1" height="45" fill="#fff"/><rect x="497.0" y="346" width="1.2" height="45" fill="#fff"/><rect x="500.2" y="346" width="2.5" height="45" fill="#fff"/><rect x="503.2" y="346" width="2" height="45" fill="#000"/><rect x="507.2" y="346" width="1.2" height="45" fill="#ddd"/><rect x="509.4" y="346" width="1" height="45" fill="#aaa"/><rect x="512.4" y="346" width="1.5" height="45" fill="#fff"/><rect x="514.9" y="346" width="1" height="45" fill="#fff"/><rect x="516.9" y="346" width="3" height="45" fill="#ddd"/><rect x="521.9" y="346" width="2.5" height="45" fill="#000"/><rect x="524.9" y="346" width="1" height="45" fill="#fff"/><rect x="526.4" y="346" width="1.2" height="45" fill="#000"/><rect x="529.1" y="346" width="1.5" height="45" fill="#fff"/><rect x="532.6" y="346" width="2.5" height="45" fill="#888"/><rect x="537.1" y="346" width="2.5" height="45" fill="#fff"/><rect x="541.6" y="346" width="1" height="45" fill="#666"/><rect x="543.1" y="346" width="0.8" height="45" fill="#111"/><rect x="545.9" y="346" width="1" height="45" fill="#444"/><rect x="548.9" y="346" width="3" height="45" fill="#fff"/><rect x="553.4" y="346" width="1.5" height="45" fill="#ddd"/><rect x="556.9" y="346" width="2" height="45" fill="#666"/><rect x="560.9" y="346" width="2" height="45" fill="#333"/><rect x="564.4" y="346" width="2.5" height="45" fill="#000"/><rect x="568.4" y="346" width="2" height="45" fill="#fff"/><rect x="571.4" y="346" width="2.5" height="45" fill="#666"/><rect x="574.4" y="346" width="2.5" height="45" fill="#fff"/><rect x="577.9" y="346" width="2.5" height="45" fill="#fff"/><rect x="581.9" y="346" width="1.2" height="45" fill="#000"/><rect x="583.6" y="346" width="1.5" height="45" fill="#fff"/><rect x="587.1" y="346" width="0.8" height="45" fill="#666"/><rect x="588.4" y="346" width="1.5" height="45" fill="#111"/><rect x="590.4" y="346" width="1.2" height="45" fill="#888"/><rect x="593.6" y="346" width="3" height="45" fill="#000"/><rect x="597.1" y="346" width="2" height="45" fill="#fff"/><rect x="599.6" y="346" width="1.5" height="45" fill="#fff"/><rect x="602.6" y="346" width="2" height="45" fill="#444"/><rect x="605.6" y="346" width="0.8" height="45" fill="#444"/><rect x="606.9" y="346" width="0.8" height="45" fill="#000"/><rect x="608.2" y="346" width="1" height="45" fill="#888"/><rect x="610.7" y="346" width="2" height="45" fill="#444"/><rect x="613.7" y="346" width="2.5" height="45" fill="#000"/><rect x="617.7" y="346" width="1.2" height="45" fill="#666"/><rect x="619.9" y="346" width="3" height="45" fill="#888"/><rect x="624.9" y="346" width="1.5" height="45" fill="#ddd"/><rect x="628.4" y="346" width="2.5" height="45" fill="#fff"/><rect x="631.4" y="346" width="2" height="45" fill="#ddd"/></g></g>
<g clip-path="url(#cpB)"><path d="M486 411C498 440 511 472 520 497M504.0 455.2Q485.2 471.9 486.4 494.4M495.3 433.6Q479.0 448.3 476.6 466.0M492.1 425.7Q479.3 437.3 485.6 454.5M517.2 489.2Q531.5 489.1 540.4 497.1M504.0 455.2Q528.9 454.5 544.8 467.3M491.0 423.2Q504.6 422.6 511.0 435.1M489.9 420.5Q477.8 431.5 480.8 447.0M495.5 434.0Q514.0 433.3 526.1 442.5M510.6 472.0Q496.9 484.0 494.2 498.5M507.2 463.2Q525.1 462.7 537.0 470.5M496.6 436.9Q481.9 450.2 491.4 470.3M492.5 426.8Q508.4 426.2 519.4 430.6M518.9 494.1Q536.4 494.1 544.1 510.1M490.7 422.3Q479.6 432.4 473.5 441.3M491.3 424.0Q505.4 423.4 515.0 428.3M491.8 425.1Q480.2 435.7 488.0 451.8M518.0 491.6Q529.0 491.5 534.1 501.3M490.9 422.9Q478.5 434.2 484.0 450.7M503.8 454.8Q527.9 454.0 544.9 457.5M502.9 452.5Q488.3 465.5 495.8 485.1M496.1 435.5Q477.9 451.9 470.3 468.3M508.5 466.5Q527.2 466.0 535.8 483.1M516.2 486.6Q528.7 486.5 533.1 499.8M503.6 454.3Q522.0 453.7 534.5 460.4M498.8 442.4Q515.1 441.8 521.4 458.4M509.8 470.0Q527.9 469.5 539.2 479.3M504.0 455.2Q492.1 465.8 487.5 476.8M501.8 449.7Q518.8 449.2 527.6 463.0M509.0 467.9Q530.5 467.4 539.8 487.9M507.2 463.4Q491.0 477.7 483.8 491.9M503.0 452.6Q523.7 452.0 532.2 472.6M497.5 439.0Q480.2 454.6 485.9 477.1M508.6 466.8Q489.5 483.5 489.0 505.5M519.4 495.4Q533.3 495.4 539.4 508.0M516.1 486.5Q536.5 486.3 546.4 503.7M495.8 434.7Q513.4 434.1 520.4 452.3M497.3 438.5Q515.0 437.8 523.0 454.4M507.8 464.8Q523.4 464.4 529.6 480.3M503.9 455.0Q486.7 470.3 483.5 488.7M508.2 465.8Q533.6 465.2 549.5 479.2M504.7 457.0Q484.9 474.6 480.1 495.1M489.6 419.7Q507.1 419.0 517.6 430.4M499.6 444.2Q520.2 443.5 528.3 464.6M512.8 477.8Q535.9 477.4 551.5 485.5M500.7 446.9Q482.1 463.6 473.5 479.8M502.8 452.3Q524.3 451.6 539.2 457.4M509.5 469.0Q499.1 478.1 500.7 490.8M491.3 423.9Q512.8 423.0 526.7 433.6M516.9 488.5Q503.2 500.0 504.8 516.5M508.1 465.5Q492.6 479.2 493.3 497.6M506.1 460.5Q521.3 460.1 529.2 472.6M489.6 419.8Q506.1 419.1 516.0 429.5M518.0 491.4Q507.7 500.1 502.8 508.7M493.7 429.7Q514.3 428.9 526.8 441.5M500.4 446.2Q487.8 457.5 487.9 472.3M502.4 451.3Q487.8 464.4 493.7 483.7M514.8 483.0Q530.7 482.8 541.6 487.0M508.2 465.7Q496.5 476.0 500.9 491.2M500.7 446.8Q526.6 446.0 543.9 457.0M498.2 440.7Q517.5 440.1 525.5 459.2M518.1 491.8Q506.8 501.3 508.2 514.9M510.9 472.7Q493.5 488.0 497.3 509.9M498.2 440.9Q515.2 440.2 526.3 448.0M500.8 447.1Q519.8 446.5 532.2 455.9M495.3 433.6Q484.6 443.2 488.5 457.2M490.5 421.8Q507.6 421.1 517.7 432.8M510.4 471.4Q494.1 485.7 485.4 498.8M495.6 434.4Q479.9 448.6 485.2 469.0M513.4 479.1Q528.8 478.9 535.5 493.5M500.5 446.4Q524.4 445.6 537.7 463.2M517.6 490.4Q536.3 490.3 546.4 504.1M501.9 449.9Q485.4 464.6 486.5 484.3M517.7 490.6Q505.2 501.2 504.1 515.1M505.6 459.2Q488.8 474.2 489.6 494.2M495.8 434.8Q519.2 433.9 530.3 455.0M519.5 495.6Q507.5 505.7 506.6 519.1M499.6 444.3Q514.5 443.8 522.4 455.4M503.6 454.2Q488.4 467.8 483.5 482.8M489.8 420.3Q500.8 419.9 507.2 427.5M506.6 461.7Q533.4 461.0 549.1 478.9M517.4 490.0Q505.9 499.7 499.9 508.9M518.7 493.4Q532.2 493.4 541.1 498.8M507.4 463.8Q532.0 463.1 546.9 478.3M507.4 463.9Q487.9 481.1 483.8 501.6M516.6 487.8Q528.9 487.7 534.9 497.9M507.0 462.6Q494.5 473.6 493.4 487.5M506.7 461.9Q521.1 461.5 530.1 469.2M519.2 494.9Q505.7 506.2 504.6 521.2M493.0 428.0Q505.6 427.5 514.0 433.0M506.8 462.2Q488.6 478.2 479.8 493.5M502.4 451.2Q518.1 450.7 527.4 461.1M503.4 453.6Q491.8 464.0 491.5 477.4M502.9 452.5Q518.7 452.0 529.8 455.2M514.1 481.0Q527.9 480.8 532.7 495.5M489.3 419.0Q479.1 428.2 481.7 441.2M509.3 468.6Q530.1 468.1 542.5 481.5M516.1 486.4Q502.3 498.3 498.4 512.0M516.8 488.4Q531.6 488.3 539.4 499.6M506.5 461.4Q531.5 460.7 546.8 475.8M506.6 461.8Q531.5 461.1 546.6 476.3M509.1 468.0Q531.9 467.4 542.7 487.8M515.0 483.3Q530.0 483.2 537.6 495.5M518.0 491.6Q529.9 491.5 537.8 496.0M492.1 425.9Q504.7 425.4 510.1 437.6M501.9 449.9Q487.4 462.9 481.8 476.3M514.4 481.8Q533.2 481.5 541.5 498.9M514.6 482.5Q533.8 482.2 542.4 500.0M517.7 490.8Q506.3 500.4 511.6 515.5M513.5 479.4Q531.2 479.1 543.2 485.2M489.7 420.0Q480.6 428.3 485.1 440.6M495.8 434.7Q519.5 433.8 536.2 437.0M492.1 425.8Q510.9 425.0 519.0 443.3M491.5 424.3Q507.7 423.7 516.3 436.6M506.0 460.3Q491.9 472.8 497.3 491.3M509.7 469.7Q525.5 469.4 536.3 474.0M504.0 455.3Q491.6 466.4 493.2 481.6M494.4 431.5Q507.9 431.0 515.0 441.7M515.8 485.7Q505.8 494.3 504.7 505.4M508.2 465.8Q495.4 477.1 490.8 489.2M517.7 490.7Q531.7 490.7 541.2 495.4" fill="none" stroke="#f0f0f0" stroke-width="0.75" opacity="1" stroke-linecap="round"/><path d="M642 424C660 446 684 466 703 481M659.8 443.4Q680.5 433.7 698.7 447.7M693.9 473.7Q689.3 487.1 689.1 497.3M701.3 479.7Q697.7 490.3 701.7 498.9M702.8 480.9Q700.3 488.5 702.2 494.7M652.5 436.0Q644.7 451.5 658.7 465.0M700.0 478.6Q696.2 489.8 700.0 498.8M691.3 471.6Q700.9 465.9 709.5 465.8M700.7 479.2Q714.1 470.9 727.4 475.4M702.3 480.4Q715.5 472.3 728.8 481.5M672.6 455.5Q693.6 444.4 712.4 447.2M698.3 477.2Q692.8 493.3 706.9 504.9M677.6 460.0Q698.8 448.4 718.3 453.3M674.4 457.2Q665.4 479.8 671.1 498.6M693.8 473.6Q710.2 463.7 723.3 459.3M683.1 464.8Q701.6 454.2 719.1 459.7M699.0 477.8Q696.0 486.7 696.8 493.6M670.0 453.2Q690.4 442.6 707.2 441.0M669.3 452.6Q661.1 472.2 675.3 488.5M679.7 461.9Q696.1 452.8 710.3 452.3M664.3 447.9Q656.5 465.5 662.9 480.9M702.1 480.3Q698.8 490.2 699.1 497.9M673.6 456.4Q694.1 445.5 712.9 451.4M696.8 476.1Q708.6 468.9 720.2 478.1M700.8 479.3Q709.2 474.1 717.1 474.9M670.1 453.2Q686.7 444.6 701.8 449.4M700.9 479.3Q696.7 491.9 701.4 501.9M671.0 454.1Q666.0 466.2 671.4 476.4M690.7 471.1Q684.7 488.0 699.0 500.6M701.6 479.9Q696.9 494.1 705.0 505.2M668.0 451.3Q658.5 473.6 670.1 492.7M701.6 479.9Q698.0 490.8 702.4 499.5M688.8 469.5Q684.5 481.5 690.2 491.2M699.9 478.5Q696.5 488.6 697.0 496.4M669.6 452.8Q686.8 443.9 702.7 452.2M693.4 473.3Q689.0 486.1 701.2 495.1M699.1 477.9Q696.0 487.1 695.7 494.1M673.7 456.6Q694.5 445.5 713.9 456.4M650.7 434.0Q643.3 448.1 641.4 459.5M646.5 429.4Q638.7 443.5 648.7 456.8M697.7 476.8Q710.3 469.2 722.3 471.2M690.3 470.8Q706.6 461.2 719.5 457.0M673.4 456.2Q690.1 447.3 705.6 459.9M669.4 452.6Q681.3 446.4 692.3 450.8M672.2 455.2Q663.0 477.8 683.2 495.4M652.7 436.2Q670.4 428.6 685.5 434.5M683.8 465.4Q702.2 454.9 716.9 450.7M666.3 449.7Q658.2 468.5 671.5 484.2M673.6 456.5Q688.9 448.3 703.1 459.6M677.7 460.1Q697.0 449.4 715.3 463.7M651.3 434.7Q644.4 448.0 645.6 459.6M647.3 430.2Q662.8 424.1 674.4 439.0M663.0 446.6Q683.0 436.9 700.6 452.2M688.0 468.9Q699.6 462.1 710.9 470.9M673.2 456.1Q665.0 476.3 682.9 492.0M685.3 466.6Q678.8 484.3 690.8 498.3M693.6 473.5Q690.0 483.9 692.7 492.3M655.4 439.0Q668.8 433.0 680.4 441.3M686.8 467.9Q700.0 460.3 712.7 465.5M656.8 440.4Q651.3 451.8 655.8 462.0M679.2 461.4Q671.1 482.7 680.6 500.4M694.2 474.0Q706.3 466.8 718.0 477.4M675.3 458.0Q691.5 449.2 706.7 461.0M692.5 472.6Q707.9 463.4 721.7 463.4M663.0 446.6Q678.2 439.2 691.2 453.2M663.4 447.0Q654.8 466.3 668.5 482.8M690.7 471.1Q686.9 482.1 690.0 491.0M651.8 435.2Q646.8 444.9 654.1 453.7M665.9 449.3Q684.3 440.1 700.8 454.0M663.2 446.8Q655.0 465.1 652.2 479.3M657.2 440.8Q649.3 457.3 663.3 471.5M691.0 471.4Q686.6 483.8 698.5 492.6M658.6 442.2Q670.3 436.7 680.7 443.6M676.6 459.1Q670.0 476.0 681.2 489.7M681.1 463.0Q700.2 452.3 716.7 451.1M661.6 445.2Q653.2 463.6 653.0 478.6M664.5 448.0Q680.6 440.1 694.3 441.1M677.6 460.0Q691.5 452.4 702.8 450.3M687.9 468.8Q682.0 485.1 692.9 498.0M697.0 476.2Q691.9 491.3 702.4 502.9M694.9 474.5Q689.6 489.8 691.0 501.8M683.7 465.3Q678.8 478.4 683.8 489.3M657.9 441.5Q651.1 455.7 662.5 468.0M689.0 469.7Q701.3 462.6 712.8 465.4M678.2 460.6Q669.9 482.0 683.8 499.5M701.3 479.6Q714.2 471.7 726.9 483.2M681.4 463.3Q675.6 478.7 679.3 491.3M662.5 446.1Q657.1 458.2 666.9 468.3M670.1 453.3Q661.3 474.3 674.8 491.9M665.3 448.8Q682.2 440.4 697.5 449.1M678.6 460.9Q699.1 449.6 715.5 445.6M698.2 477.2Q708.6 470.9 717.9 470.8M665.0 448.5Q683.9 439.1 701.1 448.9M675.8 458.4Q695.2 447.9 713.1 452.6M673.2 456.1Q664.5 477.5 663.5 494.4M657.1 440.8Q650.7 454.3 657.3 466.4M664.1 447.6Q678.1 440.7 690.7 446.8M651.1 434.4Q668.9 426.9 683.6 429.1M677.5 459.9Q693.7 451.0 706.9 448.2M699.4 478.1Q695.1 490.8 696.9 500.9M678.6 460.9Q672.1 477.7 685.0 491.0M701.3 479.7Q708.6 475.2 715.7 477.2M672.4 455.4Q663.2 477.9 663.3 496.0M647.1 430.0Q642.4 438.6 647.6 446.7M675.0 457.7Q696.1 446.3 714.2 446.0M656.8 440.5Q674.5 432.5 689.8 437.4M658.9 442.5Q673.2 435.9 685.2 437.0M659.3 442.9Q679.8 433.3 695.8 430.1M673.0 455.9Q665.6 474.2 668.9 489.4M658.7 442.4Q675.1 434.7 689.3 446.3M673.9 456.7Q694.2 445.8 713.3 455.5M693.5 473.4Q708.7 464.3 723.7 474.0M659.4 443.1Q650.7 461.8 649.2 476.8M684.6 466.0Q679.3 480.3 689.6 491.6M698.2 477.2Q695.2 486.2 698.7 493.5M700.9 479.4Q713.2 471.8 723.3 469.2M688.2 469.0Q705.6 458.9 722.7 469.2M681.3 463.2Q701.9 451.6 720.9 455.1M649.8 433.0Q641.4 448.9 648.2 463.7M687.7 468.6Q682.8 482.3 690.4 493.4M651.1 434.4Q663.9 429.0 674.4 429.7" fill="none" stroke="#f4f4f4" stroke-width="0.75" opacity="1" stroke-linecap="round"/><path d="M520 430C545 425 570 428 590 427M578.4 427.2Q580.8 433.8 589.1 432.4M586.6 427.1Q589.3 434.0 597.4 433.6M566.9 427.1Q570.7 416.9 582.4 416.7M526.2 428.9Q530.7 437.3 542.1 432.6M537.8 427.6Q540.8 417.0 552.8 416.1M538.5 427.6Q542.4 436.2 553.8 433.1M543.8 427.3Q546.8 434.5 556.1 432.6M531.6 428.2Q534.0 418.1 544.2 415.8M565.8 427.1Q570.1 415.9 584.6 419.2M572.9 427.2Q576.9 416.5 588.1 415.0M532.5 428.1Q537.2 437.7 547.4 438.6M577.5 427.2Q580.8 418.4 591.9 419.8M585.5 427.2Q587.9 420.1 596.5 420.6M580.2 427.2Q583.8 437.2 594.3 438.8M561.7 427.0Q565.1 418.0 575.2 417.7M535.5 427.8Q540.4 438.2 554.4 433.3M529.6 428.4Q531.7 419.4 540.5 416.9M555.3 427.0Q559.8 439.1 570.9 442.6M571.7 427.2Q575.7 416.5 587.4 415.6M569.6 427.1Q572.1 420.4 580.5 421.4M581.1 427.2Q584.3 436.1 592.8 438.3M564.6 427.1Q567.4 419.7 574.9 418.5M580.2 427.2Q582.6 420.7 589.5 419.8M570.3 427.1Q573.3 435.6 584.3 433.5M558.1 427.0Q561.0 419.1 571.0 420.5M580.7 427.2Q582.7 421.8 589.7 423.0M587.7 427.1Q590.2 419.4 598.3 418.4M588.2 427.1Q590.3 432.5 596.7 432.2M580.8 427.2Q583.4 419.9 592.0 420.0M562.4 427.0Q565.1 434.8 574.2 434.6M565.6 427.1Q569.7 416.3 583.9 420.0M526.6 428.9Q528.3 420.7 537.2 419.3M577.2 427.2Q580.6 418.1 592.4 420.7M545.4 427.2Q549.8 438.1 562.5 437.8M553.3 427.0Q556.4 435.3 564.7 437.0M584.3 427.2Q586.5 420.8 592.7 419.3M585.2 427.2Q588.3 435.2 595.8 437.3M590.0 427.0Q592.9 433.9 599.4 435.6M569.6 427.1Q572.6 435.7 582.5 435.9M582.5 427.2Q586.0 436.4 594.5 438.9M581.1 427.2Q583.5 433.8 589.8 435.5M533.1 428.0Q535.5 418.3 547.0 418.1M529.4 428.5Q531.5 419.0 541.9 417.5M587.8 427.1Q590.4 419.2 598.8 418.3M544.5 427.2Q547.2 418.8 556.2 417.7M571.0 427.1Q574.6 437.3 587.9 434.6M531.4 428.2Q535.7 436.7 545.4 436.4M526.3 428.9Q529.1 434.0 534.9 434.0M553.5 427.0Q556.0 419.7 564.7 420.0M551.5 427.0Q555.5 415.7 570.5 419.1M578.9 427.2Q582.4 436.9 593.0 437.7M562.5 427.0Q566.2 417.2 579.1 420.3M589.5 427.0Q591.3 431.4 596.5 431.2M574.7 427.2Q578.5 417.2 589.9 417.1M548.0 427.1Q551.6 436.4 563.4 434.3M555.5 427.0Q559.9 438.9 572.4 440.6M577.5 427.2Q579.9 434.0 587.1 434.8M567.0 427.1Q569.9 435.5 579.0 436.3M588.0 427.1Q590.6 433.4 598.7 431.7M577.6 427.2Q581.2 417.5 593.4 419.2M586.6 427.1Q589.7 435.1 598.5 435.7M561.4 427.0Q564.8 436.6 576.7 435.4M572.2 427.2Q575.9 417.3 587.4 417.6M545.1 427.2Q548.8 415.5 559.5 411.8M565.0 427.1Q568.6 437.3 580.2 437.5M571.9 427.2Q575.9 416.6 587.3 415.5M562.4 427.0Q565.6 435.9 575.9 436.0M537.6 427.6Q541.2 435.6 549.4 436.8M575.6 427.2Q578.4 419.8 585.3 417.8M545.4 427.2Q548.0 433.6 555.0 434.0M531.3 428.2Q534.7 435.0 541.7 436.0M544.2 427.2Q546.5 420.0 555.2 420.4M556.2 427.0Q559.7 417.4 572.0 419.6M546.1 427.2Q550.7 438.6 561.6 441.3M570.1 427.1Q573.4 418.5 584.5 420.6M527.7 428.7Q529.2 421.5 537.1 420.4M539.7 427.5Q543.1 416.1 553.4 412.5M533.4 428.0Q536.1 433.7 542.0 434.6M530.0 428.4Q533.2 434.6 540.7 433.6M562.2 427.0Q565.8 417.4 577.0 417.4M565.1 427.1Q569.4 415.9 581.5 415.0M587.3 427.1Q589.6 420.2 598.3 421.4M540.6 427.4Q543.3 433.7 549.4 435.0M562.6 427.0Q565.9 418.3 576.0 418.3M556.5 427.0Q559.1 434.3 566.0 436.3M558.4 427.0Q562.1 437.2 572.8 438.7M532.6 428.1Q534.6 419.9 545.1 420.9M545.4 427.2Q548.7 435.4 557.4 436.3M558.2 427.0Q562.3 438.5 576.8 436.4M529.0 428.5Q530.9 420.3 538.8 417.9M586.0 427.2Q591.3 431.2 595.9 437.7M586.0 427.2Q595.5 432.9 603.2 439.0M586.0 427.2Q592.6 432.2 597.3 435.3M586.0 427.2Q592.0 421.6 593.3 416.2M586.0 427.2Q590.8 432.1 592.4 439.6M586.0 427.2Q590.5 429.9 594.9 434.0M586.0 427.2Q593.0 429.6 596.3 435.4M586.0 427.2Q597.8 419.4 602.7 415.1M586.0 427.2Q589.6 432.7 592.1 439.5M586.0 427.2Q591.8 433.6 591.4 436.7M586.0 427.2Q593.9 432.9 594.5 441.9M586.0 427.2Q597.5 429.8 604.8 436.6M586.0 427.2Q594.3 423.8 599.3 418.8M586.0 427.2Q592.5 425.4 593.7 419.8M586.0 427.2Q598.2 426.9 604.7 425.5M586.0 427.2Q593.4 430.0 595.2 433.5M586.0 427.2Q595.9 425.5 604.7 420.6M586.0 427.2Q596.4 432.5 599.5 440.3M586.0 427.2Q598.4 429.8 606.5 431.2M586.0 427.2Q590.0 420.0 593.7 412.8M586.0 427.2Q588.5 420.6 590.1 415.9M586.0 427.2Q592.5 421.1 594.9 413.0M586.0 427.2Q594.8 433.2 598.8 439.2M586.0 427.2Q593.7 431.1 598.4 436.0M586.0 427.2Q590.5 421.5 590.0 416.9M586.0 427.2Q592.9 427.2 598.6 424.5" fill="none" stroke="#cfcfcf" stroke-width="0.5" opacity="0.85" stroke-linecap="round"/><g fill="none" stroke="#d4d4d4" stroke-width="1.2"><circle cx="554" cy="417.5" r="16"/><path d="M548 430C542 425 542 410 550 405C556 401 562 406 560 414C558 420 552 420 552 414"/><path d="M556 402C566 400 570 410 566 418C562 426 556 428 556 420"/><path d="M514 421.5H572M516 425H570M522 418H566"/><path d="M519 399C526 396 532 400 534 407C526 404 522 404 519 399Z"/><path d="M512 440C530 430 548 440 560 455M515 455C530 445 545 455 556 468"/></g><circle cx="590" cy="427.5" r="4" fill="#f4f4f4"/><circle cx="590" cy="427.5" r="7" fill="#fff" opacity="0.35"/><path d="M629.6 444.4 L629.3 445.1 L628.9 445.8 L628.4 446.5 L627.8 447.1 L627.2 447.6 L626.6 448.1 L625.9 448.5 L625.2 448.8 L624.4 449.1 L623.6 449.2 L622.9 449.3 L622.1 449.3 L621.3 449.2 L620.6 449.0 L619.9 448.8 L619.2 448.5 L618.6 448.1 L618.0 447.6 L617.5 447.1 L617.0 446.6 L616.6 446.0 L616.3 445.4 L616.0 444.8 L615.8 444.1 L615.7 443.4 L615.7 442.8 L615.7 442.1 L615.8 441.4 L615.9 440.8 L616.1 440.2 L616.4 439.6 L616.7 439.1 L617.1 438.6 L617.6 438.1 L618.0 437.7 L618.5 437.4 L619.1 437.1 L619.6 436.9 L620.2 436.7 L620.8 436.6 L621.4 436.6 L621.9 436.6 L622.5 436.7 L623.0 436.9 L623.5 437.1 L624.0 437.3 L624.5 437.6 L624.9 437.9 L625.2 438.3 L625.6 438.7 L625.8 439.1 L626.1 439.6 L626.2 440.0 L626.3 440.5 L626.4 441.0 L626.4 441.5 L626.4 441.9 L626.3 442.4 L626.2 442.8 L626.0 443.2 L625.8 443.6 L625.5 444.0 L625.3 444.3 L624.9 444.6 L624.6 444.8 L624.3 445.0 L623.9 445.2 L623.5 445.3 L623.2 445.4 L622.8 445.4 L622.4 445.4 L622.0 445.4 L621.7 445.3 L621.4 445.2 L621.1 445.0 L620.8 444.8 L620.5 444.6 L620.3 444.4 L620.1 444.2 L619.9 443.9 L619.8 443.6 L619.7 443.4 L619.7 443.1 L619.6 442.8 L619.6 442.5 L619.7 442.3 L619.7 442.0 L619.8 441.8 L619.9 441.6 L620.0 441.4 L620.2 441.2 L620.3 441.1 L620.5 441.0 L620.7 440.9 L620.9 440.8 L621.1 440.7 L621.2 440.7 L621.4 440.7 L621.6 440.8 L621.7 440.8 L621.9 440.9 L622.0 441.0" fill="none" stroke="#8a8a8a" stroke-width="0.8"/><g fill="#ccc"><circle cx="541" cy="380" r="0.9"/><circle cx="555" cy="378" r="0.9"/><circle cx="563" cy="379" r="0.9"/><circle cx="567" cy="392" r="0.9"/></g></g>
<g fill="#bdbdbd" stroke="#eee" stroke-width="0.6"><ellipse cx="640" cy="325" rx="5" ry="2.6" transform="rotate(-15 640 325)"/><ellipse cx="636" cy="334" rx="5" ry="2.6" transform="rotate(25 636 334)"/><ellipse cx="625" cy="320" rx="4" ry="2.2" transform="rotate(-70 625 320)"/></g>
<path d="M521 408.5C518 410.5 516 411.2 514 411.5C500 414 483 409 470 399C456 387 449 369 451 352C453 330 466 311 486 300C504 290 526 287 548 290C575 294 600 306 616 327C619 331 621 336 622 340" fill="none" stroke="#000" stroke-width="3.4"/>
<g clip-path="url(#cpB)"><path d="M521 408.5C518 410.5 516 411.2 514 411.5C500 414 483 409 470 399C456 387 449 369 451 352C453 330 466 311 486 300C504 290 526 287 548 290C575 294 600 306 616 327C619 331 621 336 622 340" fill="none" stroke="#fff" stroke-width="4.2"/></g>
<path d="M619.5 341C623 346 627 356 629 364.5C631 371 634 382 635.9 390.4C637.5 398 639 408 639.4 416.4C639.6 419 640 421 643 422C645.5 421 646.3 419 646.3 416.4C646 408 644.5 398 642.8 390.4C641 382 637 371 634.2 364.5C631 356 627 347 622.5 340.5Z" fill="#fff"/>
<clipPath id="zc"><path d="M461 347L465 341L467 338.5L469 342L470 345L476 351L494 353.4L513 352.5L517 356L519 362L521 373L517.5 364L516.5 372L517 384.3L514 384.3L511 372L500 371.5L482 370.5L481.5 386L478.5 386L477 370L472 360L467 357L463 357.5L460.5 354Z"/></clipPath>
<path d="M461 347L465 341L467 338.5L469 342L470 345L476 351L494 353.4L513 352.5L517 356L519 362L521 373L517.5 364L516.5 372L517 384.3L514 384.3L511 372L500 371.5L482 370.5L481.5 386L478.5 386L477 370L472 360L467 357L463 357.5L460.5 354Z" fill="#f8f8f8" stroke="#222" stroke-width="0.6"/>
<g clip-path="url(#zc)"><path d="M471.0 344C473.5 352 472.0 362 473.0 372M474.2 344C476.7 352 475.2 362 476.2 372M477.4 344C479.9 352 478.4 362 479.4 372M480.6 344C483.1 352 481.6 362 482.6 372M483.8 344C486.3 352 484.8 362 485.8 372M487.0 344C489.5 352 488.0 362 489.0 372M490.2 344C492.7 352 491.2 362 492.2 372M493.4 344C495.9 352 494.4 362 495.4 372M496.6 344C499.1 352 497.6 362 498.6 372M499.8 344C502.3 352 500.8 362 501.8 372M503.0 344C505.5 352 504.0 362 505.0 372M500 356.0C506 352.0 512 353.0 520 356.0M500 359.5C506 355.5 512 356.0 520 359.2M500 363.0C506 359.0 512 359.0 520 362.4M500 366.5C506 362.5 512 362.0 520 365.6M500 370.0C506 366.0 512 365.0 520 368.8" stroke="#000" stroke-width="1.5" fill="none"/><path d="M460 346L468 357" stroke="#000" stroke-width="3"/></g>
<path d="M513 353C517 358 519 366 521 373" stroke="#111" stroke-width="1.2" fill="none"/>
<clipPath id="zc2"><path d="M530 368C534 360 546 356 558 357C568 358 575 362 577 368L574 375H534Z"/></clipPath>
<path d="M530 368C534 360 546 356 558 357C568 358 575 362 577 368L574 375H534Z" fill="#eee" stroke="#333" stroke-width="0.8"/>
<g clip-path="url(#zc2)"><path d="M536 356C538 362 536 368 538 376M540 356C542 362 540 368 542 376M544 356C546 362 544 368 546 376M548 356C550 362 548 368 550 376M552 356C554 362 552 368 554 376M556 356C558 362 556 368 558 376M560 356C562 362 560 368 562 376M564 356C566 362 564 368 566 376M568 356C570 362 568 368 570 376M572 356C574 362 572 368 574 376" stroke="#444" stroke-width="1.2" fill="none"/></g>
<g stroke-linejoin="round"><path d="M626 254L629.5 241L641 226L650 219L659.4 215.8L660.6 220.4L658.3 238.8L652.5 246.8L659 251.4L661.2 258.3L657.1 268.7L649 275.6L643.3 275.6L629.5 258Z" fill="#111"/><path d="M631 251L634 240L643 229L651 223L656.5 221L655 236L648 246L634 253Z" fill="#dcdcdc"/><path d="M634 256L648 250L656 254L657 262L652 270L645 272L637 264Z" fill="#d8d8d8"/><path d="M632 250L651 224M634 252L655 232M635 254L654 243M637 258L655 256M638 262L652 266M638 264L646 271" stroke="#222" stroke-width="1"/><g fill="#f4f4f4"><circle cx="656" cy="228" r="0.9"/><circle cx="657" cy="235" r="0.9"/><circle cx="659" cy="258" r="0.9"/><circle cx="655" cy="266" r="0.9"/><circle cx="648" cy="273" r="0.9"/><circle cx="652" cy="222" r="0.9"/></g><path d="M626 254L610 254.5L599.6 256L600.8 260.6L612.3 266.4L621.5 272.1L627 266Z" fill="#161616"/><path d="M604 258L614 258L622 258M606 261L616 264L622 268" stroke="#bbb" stroke-width="1.6" stroke-dasharray="2.5 1.5"/><path d="M626 262L627.2 274.4L633 281.3L641 282.5L642.2 277.9L633 264.1Z" fill="#111" stroke="#aaa" stroke-width="0.6"/><path d="M629 267L637 278" stroke="#777" stroke-width="0.8"/><path d="M626 254L622 243M626 254L630 244" stroke="#aaa" stroke-width="0.5"/></g>
<g stroke-linejoin="round"><path d="M638.5 289.6L642 290L657 316L655 318Z" fill="#d8d8d8"/><path d="M669.5 290.7L681 280.4L689.1 277.5L691.4 283.8L690.2 298.8L683.3 306.8L677.6 305.7Z" fill="#141414" stroke="#e8e8e8" stroke-width="0.7"/><g fill="#e4e4e4"><ellipse cx="686" cy="284" rx="1.4" ry="0.9"/><ellipse cx="685" cy="289" rx="1.5" ry="0.9"/><ellipse cx="684" cy="294" rx="1.5" ry="0.9"/><ellipse cx="682" cy="299" rx="1.4" ry="0.9"/><ellipse cx="679" cy="287" rx="1.2" ry="0.8"/><ellipse cx="678" cy="292" rx="1.2" ry="0.8"/><ellipse cx="676" cy="297" rx="1.1" ry="0.8"/></g><path d="M669.5 290.7L663.8 296.5L659.2 308L655.7 318.3L661.5 329.8L664.9 339L666 344.8L671.8 332.1L677.6 308Z" fill="#ececec" stroke="#999" stroke-width="0.6"/><path d="M662 300L672 322M666 298L674 316M660 312L668 330" stroke="#aaa" stroke-width="0.7"/><path d="M674.1 309.1L679.9 309L689.1 316L690.2 324.1L687.9 334.4L694.8 339L685.6 334.4L677.6 334.4L671.8 327.5Z" fill="#141414" stroke="#ddd" stroke-width="0.6"/><g fill="#ddd"><ellipse cx="678" cy="315" rx="1.5" ry="1"/><ellipse cx="676" cy="321" rx="1.5" ry="1"/><ellipse cx="676" cy="327" rx="1.5" ry="1"/><ellipse cx="685" cy="320" rx="1" ry="1.4"/><ellipse cx="685" cy="327" rx="1" ry="1.4"/></g></g>
<g stroke-linejoin="round"><path d="M593 276L586 269L578 264L574.2 263.4L574.5 270L576 282.2L582.1 286.4L588 283Z" fill="#d4d4d4" stroke="#444" stroke-width="1.1"/><path d="M593 276L599 276.1L609.9 276.7L614.7 280.4L606.3 283.4L600.2 286.4L599 289.4L593 293L589.3 288.2L588 283Z" fill="#dadada" stroke="#444" stroke-width="1.1"/><path d="M577 268L584 274M579 278L586 281M601 279L609 279M592 288L597 285" stroke="#555" stroke-width="1.2"/><path d="M593.5 275.5L587.5 283.8" stroke="#222" stroke-width="1.6"/></g>
<text x="567" y="395" font-size="5.6" fill="#d8d8d8" font-family="Liberation Mono" letter-spacing="0.25">9 876543 2109</text>
</svg>
<div class="a" style="left:573px;top:112px;width:1px;height:515px;background:#62d6cc"></div>
<div class="a" style="left:572px;top:112px;width:1px;height:515px;background:rgba(120,220,210,0.35)"></div>
<div class="a" style="left:574px;top:112px;width:1px;height:515px;background:rgba(120,220,210,0.35)"></div>

<!-- menu dropdown -->
<div class="a" style="left:117px;top:27px;width:235px;height:380px;background:#f0f0f0;border:1px solid #979797;box-shadow:2px 2px 2px rgba(0,0,0,0.3)"></div>
<div class="a" style="left:119px;top:169px;width:230px;height:19px;background:#3399ff"></div>
<div class="mi" style="top:33px">Mode</div>
<div class="arr" style="top:34px;border-left-color:#111"></div>
<div class="mi" style="top:60px">Adjustments</div>
<div class="arr" style="top:61px;border-left-color:#111"></div>
<div class="mi" style="top:87px">Auto Tone</div>
<div class="sc" style="top:87px;right:691px">Shift+Ctrl+L</div>
<div class="mi" style="top:106px">Auto Contrast</div>
<div class="sc" style="top:106px;right:691px">Alt+Shift+Ctrl+L</div>
<div class="mi" style="top:125px">Auto Color</div>
<div class="sc" style="top:125px;right:691px">Shift+Ctrl+B</div>
<div class="mi" style="top:153px">Image Size...</div>
<div class="sc" style="top:153px;right:691px">Alt+Ctrl+I</div>
<div class="mi" style="top:172px;color:#fff">Canvas Size...</div>
<div class="sc" style="top:172px;right:691px;color:#fff">Alt+Ctrl+C</div>
<div class="mi" style="top:191px">Image Rotation</div>
<div class="arr" style="top:192px;border-left-color:#111"></div>
<div class="mi d" style="top:210px">Crop</div>
<div class="mi" style="top:228px">Trim...</div>
<div class="mi d" style="top:247px">Reveal All</div>
<div class="mi" style="top:275px">Duplicate...</div>
<div class="mi" style="top:294px">Apply Image...</div>
<div class="mi" style="top:313px">Calculations...</div>
<div class="mi d" style="top:341px">Variables</div>
<div class="arr" style="top:342px;border-left-color:#6e6e6e"></div>
<div class="mi d" style="top:360px">Apply Data Set...</div>
<div class="mi d" style="top:387px">Trap...</div>
<div class="sep" style="top:51px"></div>
<div class="sep" style="top:78px"></div>
<div class="sep" style="top:144px"></div>
<div class="sep" style="top:266px"></div>
<div class="sep" style="top:332px"></div>
<div class="sep" style="top:378px"></div>

</body></html>
